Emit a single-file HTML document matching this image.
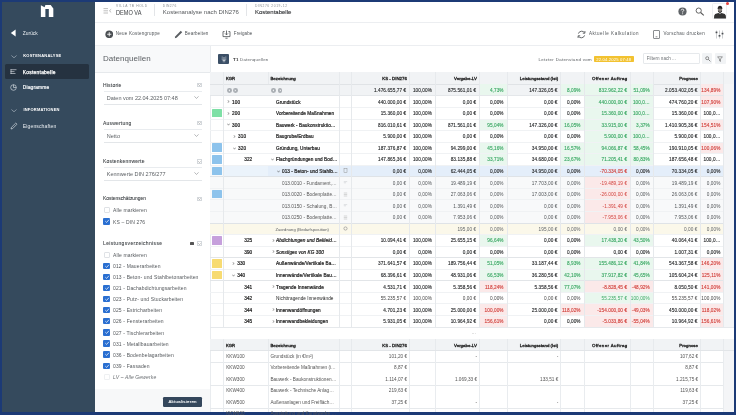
<!DOCTYPE html><html><head><meta charset="utf-8"><style>
html,body{margin:0;padding:0;width:736px;height:415px;overflow:hidden;background:#1c3a76;font-family:"Liberation Sans", sans-serif;}
div{box-sizing:border-box;}
</style></head><body><div id="root" style="position:absolute;left:0;top:0;width:736px;height:415px;will-change:transform;filter:blur(0.25px);">
<div style="position:absolute;left:2px;top:2px;width:732.00px;height:410.00px;background:#ffffff;"></div>
<div style="position:absolute;left:2px;top:2px;width:93.00px;height:410.00px;background:#354a5d;"></div>
<svg style="position:absolute;left:40px;top:4px" width="15" height="14" viewBox="0 0 15 14"><path d="M0.87 1.30 L4.58 3.16 L5.38 1.04 L10.68 1.04 L13.33 4.48 L13.33 12.97 L8.82 12.97 L8.82 5.12 L5.38 5.12 L5.38 12.97 L0.87 12.97 Z" fill="#fff"/></svg>
<svg style="position:absolute;left:10px;top:29px" width="7" height="8" viewBox="0 0 7 8"><path d="M0.8 4 L5.6 0.6 L5.6 7.4 Z" fill="#fff"/></svg>
<div style="position:absolute;left:22.8px;top:31.0px;font-size:4.9px;line-height:5.88px;color:#e8ecf0;font-weight:normal;white-space:nowrap;">Zurück</div>
<svg style="position:absolute;left:11px;top:54.6px" width="6" height="3.4" viewBox="0 0 6 3.4"><path d="M0.4 0.5 L3 2.8 L5.6 0.5" stroke="#b9c3cd" stroke-width="0.6" fill="none"/></svg>
<div style="position:absolute;left:23.2px;top:53.7px;font-size:4.0px;line-height:4.80px;color:#ffffff;font-weight:bold;white-space:nowrap;letter-spacing:0.22px;">KOSTENANALYSE</div>
<div style="position:absolute;left:5.2px;top:63.8px;width:84.00px;height:15.20px;background:#253240;border-radius:1.5px;"></div>
<svg style="position:absolute;left:9.5px;top:68.6px" width="7" height="6" viewBox="0 0 7 6"><path d="M0.5 0.7 H6.5 M0.5 2.6 H4.5 M0.5 4.5 H5.5" stroke="#e6ebf0" stroke-width="0.6"/><path d="M1 0.3 V5" stroke="#e6ebf0" stroke-width="0.6"/></svg>
<div style="position:absolute;left:22.8px;top:69.6px;font-size:4.9px;line-height:5.88px;color:#ffffff;font-weight:normal;white-space:nowrap;letter-spacing:0.25px;-webkit-text-stroke:0.25px #fff;">Kostentabelle</div>
<svg style="position:absolute;left:9.5px;top:83.5px" width="7" height="7" viewBox="0 0 7 7"><circle cx="3.5" cy="3.5" r="2.8" stroke="#e6ebf0" stroke-width="0.6" fill="none"/><path d="M3.5 0.7 V3.5 H6.3" stroke="#e6ebf0" stroke-width="0.6" fill="none"/></svg>
<div style="position:absolute;left:22.8px;top:84.6px;font-size:4.9px;line-height:5.88px;color:#f4f6f8;font-weight:normal;white-space:nowrap;letter-spacing:0.15px;-webkit-text-stroke:0.2px #f4f6f8;">Diagramme</div>
<svg style="position:absolute;left:11px;top:108.6px" width="6" height="3.4" viewBox="0 0 6 3.4"><path d="M0.4 0.5 L3 2.8 L5.6 0.5" stroke="#b9c3cd" stroke-width="0.6" fill="none"/></svg>
<div style="position:absolute;left:23.4px;top:108.0px;font-size:4.0px;line-height:4.80px;color:#ffffff;font-weight:bold;white-space:nowrap;letter-spacing:0.22px;">INFORMATIONEN</div>
<svg style="position:absolute;left:9.5px;top:121.5px" width="8" height="8" viewBox="0 0 8 8"><path d="M1 7 L1.4 5.4 L5.8 1 L7 2.2 L2.6 6.6 Z" stroke="#e6ebf0" stroke-width="0.6" fill="none"/></svg>
<div style="position:absolute;left:22.8px;top:122.6px;font-size:5.1px;line-height:6.12px;color:#e8ecf0;font-weight:normal;white-space:nowrap;letter-spacing:0.1px;">Eigenschaften</div>
<div style="position:absolute;left:95px;top:22px;width:639.00px;height:1.00px;background:#eceef1;"></div>
<svg style="position:absolute;left:102.5px;top:7.5px" width="9" height="6" viewBox="0 0 9 6"><path d="M0.5 0.6 H5 M0.5 2.8 H5 M0.5 5 H5 M8.2 1.2 L6.4 2.8 L8.2 4.4" stroke="#888" stroke-width="0.55" fill="none"/></svg>
<div style="position:absolute;left:116px;top:5.3px;font-size:3.3px;line-height:3.96px;color:#8a8f94;font-weight:normal;white-space:nowrap;letter-spacing:0.6px;">VILLA TB HOLD</div>
<div style="position:absolute;left:116px;top:9.4px;font-size:6.5px;line-height:7.80px;color:#4a4d50;font-weight:normal;white-space:nowrap;transform:scaleX(0.86);transform-origin:0 0;-webkit-text-stroke:0.05px #4a4d50;">DEMO VA</div>
<div style="position:absolute;left:154.3px;top:4.4px;width:0.70px;height:11.60px;background:#e3e5e8;"></div>
<div style="position:absolute;left:162.8px;top:5.3px;font-size:3.3px;line-height:3.96px;color:#8a8f94;font-weight:normal;white-space:nowrap;letter-spacing:0.45px;">DIN276</div>
<div style="position:absolute;left:162.8px;top:9.0px;font-size:6.0px;line-height:7.20px;color:#55585b;font-weight:normal;white-space:nowrap;">Kostenanalyse nach DIN276</div>
<div style="position:absolute;left:246.3px;top:4.4px;width:0.70px;height:11.60px;background:#e3e5e8;"></div>
<div style="position:absolute;left:255px;top:5.3px;font-size:3.3px;line-height:3.96px;color:#8a8f94;font-weight:normal;white-space:nowrap;letter-spacing:0.6px;">DIN276 2019-12</div>
<div style="position:absolute;left:255px;top:9.0px;font-size:6.0px;line-height:7.20px;color:#2a2c2f;font-weight:normal;white-space:nowrap;-webkit-text-stroke:0.1px #2a2c2f;">Kostentabelle</div>
<svg style="position:absolute;left:677.5px;top:6.8px" width="9" height="9" viewBox="0 0 9 9"><circle cx="4.5" cy="4.5" r="4.1" fill="#5f6367"/><path d="M3.2 3.4 Q3.2 2.2 4.5 2.2 Q5.8 2.2 5.8 3.3 Q5.8 4.1 4.6 4.6 L4.6 5.5" stroke="#fff" stroke-width="0.8" fill="none"/><circle cx="4.6" cy="6.7" r="0.5" fill="#fff"/></svg>
<svg style="position:absolute;left:695px;top:6.5px" width="10" height="9" viewBox="0 0 10 9"><circle cx="3.7" cy="3.6" r="2.6" stroke="#555" stroke-width="0.9" fill="none"/><path d="M5.6 5.5 L8.8 8.4" stroke="#555" stroke-width="1.1"/></svg>
<div style="position:absolute;left:712.4px;top:3.4px;width:14.80px;height:15.40px;background:#fff;border:0.5px solid #eef0f2;border-radius:1.5px;"></div>
<svg style="position:absolute;left:713.0px;top:4px" width="14" height="15" viewBox="0 0 14 15"><path d="M1 14.6 L1.2 11.6 Q1.6 9.6 4.5 9.2 L6 8.9 L7 10 L8 8.9 L9.5 9.2 Q12.4 9.6 12.8 11.6 L13 14.6 Z" fill="#333"/><ellipse cx="7" cy="5.6" rx="2.1" ry="2.7" fill="#8c8580"/><path d="M4.6 4.2 Q4.8 1.6 7 1.7 Q9.4 1.6 9.4 4.2 L9.2 5 Q7 3.8 4.8 5 Z" fill="#222"/><path d="M4.9 6 Q7 10.2 9.1 6 L9 7.6 Q7 10.4 5 7.6 Z" fill="#262626"/></svg>
<div style="position:absolute;left:725.6px;top:2.2px;width:3.2px;height:3.2px;border-radius:50%;background:#e8413c;"></div>
<div style="position:absolute;left:95px;top:44.6px;width:639.00px;height:1.00px;background:#eceef1;"></div>
<svg style="position:absolute;left:104.6px;top:29.8px" width="8.5" height="8.5" viewBox="0 0 9 9"><circle cx="4.5" cy="4.5" r="4.1" fill="#4b4f53"/><path d="M4.5 2.3 V6.7 M2.3 4.5 H6.7" stroke="#fff" stroke-width="0.9"/></svg>
<div style="position:absolute;left:115.8px;top:31.2px;font-size:4.5px;line-height:5.40px;color:#505458;font-weight:normal;white-space:nowrap;letter-spacing:0.25px;">Neue Kostengruppe</div>
<svg style="position:absolute;left:173.5px;top:29.8px" width="9" height="9" viewBox="0 0 9 9"><path d="M0.8 8.2 L1.2 6.4 L6.8 0.8 L8.2 2.2 L2.6 7.8 Z" fill="#5a5e62"/></svg>
<div style="position:absolute;left:184.8px;top:31.2px;font-size:4.5px;line-height:5.40px;color:#505458;font-weight:normal;white-space:nowrap;letter-spacing:0.2px;">Bearbeiten</div>
<svg style="position:absolute;left:221.5px;top:29.6px" width="9" height="9" viewBox="0 0 9 9"><path d="M2.6 1.6 H1 V6.6 H8 V1.6 H6.4" stroke="#4b4f53" stroke-width="0.8" fill="none"/><path d="M4.5 0.5 V4.8 M3 3.4 L4.5 4.9 L6 3.4 M3.4 8.2 H5.6" stroke="#4b4f53" stroke-width="0.8" fill="none"/></svg>
<div style="position:absolute;left:233.8px;top:31.2px;font-size:4.5px;line-height:5.40px;color:#505458;font-weight:normal;white-space:nowrap;letter-spacing:0.1px;">Freigabe</div>
<svg style="position:absolute;left:577.3px;top:29.6px" width="9" height="9" viewBox="0 0 9 9"><path d="M1.4 3.6 Q2.2 1.2 4.6 1.2 Q6.4 1.2 7.4 2.6 M7.6 5.4 Q6.8 7.8 4.4 7.8 Q2.6 7.8 1.6 6.4" stroke="#4b4f53" stroke-width="0.85" fill="none"/><path d="M7.9 1 V3.2 H5.8 M1.1 8 V5.8 H3.2" stroke="#4b4f53" stroke-width="0.85" fill="none"/></svg>
<div style="position:absolute;left:588.9px;top:31.2px;font-size:4.5px;line-height:5.40px;color:#505458;font-weight:normal;white-space:nowrap;letter-spacing:0.55px;">Aktuelle Kalkulation</div>
<svg style="position:absolute;left:652.5px;top:29.5px" width="7" height="9" viewBox="0 0 7 9"><rect x="0.5" y="0.5" width="6" height="8" rx="0.5" stroke="#5a5e62" stroke-width="0.7" fill="none"/><path d="M2.6 6.8 H4.4" stroke="#5a5e62" stroke-width="0.7"/></svg>
<div style="position:absolute;left:663.4px;top:31.2px;font-size:4.5px;line-height:5.40px;color:#505458;font-weight:normal;white-space:nowrap;letter-spacing:0.35px;">Vorschau drucken</div>
<svg style="position:absolute;left:715px;top:29.6px" width="9" height="9" viewBox="0 0 9 9"><path d="M1.5 0.5 V8.5 M4.5 0.5 V8.5 M7.5 0.5 V8.5" stroke="#9a9ea2" stroke-width="0.5"/><rect x="0.6" y="1.6" width="1.8" height="1.6" fill="#4b4f53"/><rect x="3.6" y="5" width="1.8" height="1.6" fill="#4b4f53"/><rect x="6.6" y="2.8" width="1.8" height="1.6" fill="#4b4f53"/></svg>
<div style="position:absolute;left:95px;top:45.6px;width:115.00px;height:26.80px;background:#f8f9fa;"></div>
<div style="position:absolute;left:95px;top:72.2px;width:115.00px;height:0.80px;background:#e6e9ec;"></div>
<div style="position:absolute;left:209.6px;top:45.6px;width:0.80px;height:366.40px;background:#e9ecef;"></div>
<div style="position:absolute;left:103px;top:54.0px;font-size:8.0px;line-height:9.60px;color:#5a5e62;font-weight:normal;white-space:nowrap;letter-spacing:0.05px;">Datenquellen</div>
<div style="position:absolute;left:103px;top:82.0px;font-size:5.0px;line-height:6.00px;color:#3a3e42;font-weight:normal;white-space:nowrap;-webkit-text-stroke:0.08px #3a3e42;letter-spacing:0.2px;">Historie</div>
<div style="position:absolute;left:197.4px;top:83.0px;width:4.4px;height:4.4px;border:0.5px solid #d5d9dd;background:#fff;"></div>
<svg style="position:absolute;left:198.20000000000002px;top:84.3px" width="3" height="2" viewBox="0 0 3 2"><path d="M0.2 0.3 L1.5 1.6 L2.8 0.3" stroke="#777" stroke-width="0.5" fill="none"/></svg>
<div style="position:absolute;left:103.5px;top:91.0px;width:98.50px;height:0.60px;background:#e9ecef;"></div>
<div style="position:absolute;left:103.5px;top:103.8px;width:98.50px;height:0.60px;background:#e3e6e9;"></div>
<div style="position:absolute;left:106.8px;top:95.0px;font-size:5.5px;line-height:6.60px;color:#5a5e62;font-weight:normal;white-space:nowrap;">Daten vom 22.04.2025 07:48</div>
<svg style="position:absolute;left:194px;top:96.2px" width="5" height="3" viewBox="0 0 5 3"><path d="M0.4 0.4 L2.5 2.4 L4.6 0.4" stroke="#6c7075" stroke-width="0.5" fill="none"/></svg>
<div style="position:absolute;left:103px;top:120.0px;font-size:5.0px;line-height:6.00px;color:#3a3e42;font-weight:normal;white-space:nowrap;-webkit-text-stroke:0.08px #3a3e42;letter-spacing:0.2px;">Auswertung</div>
<div style="position:absolute;left:197.4px;top:121.0px;width:4.4px;height:4.4px;border:0.5px solid #d5d9dd;background:#fff;"></div>
<svg style="position:absolute;left:198.20000000000002px;top:122.3px" width="3" height="2" viewBox="0 0 3 2"><path d="M0.2 0.3 L1.5 1.6 L2.8 0.3" stroke="#777" stroke-width="0.5" fill="none"/></svg>
<div style="position:absolute;left:103.5px;top:129.0px;width:98.50px;height:0.60px;background:#e9ecef;"></div>
<div style="position:absolute;left:103.5px;top:141.8px;width:98.50px;height:0.60px;background:#e3e6e9;"></div>
<div style="position:absolute;left:106.8px;top:133.0px;font-size:5.5px;line-height:6.60px;color:#5a5e62;font-weight:normal;white-space:nowrap;">Netto</div>
<svg style="position:absolute;left:194px;top:134.2px" width="5" height="3" viewBox="0 0 5 3"><path d="M0.4 0.4 L2.5 2.4 L4.6 0.4" stroke="#6c7075" stroke-width="0.5" fill="none"/></svg>
<div style="position:absolute;left:103px;top:158.2px;font-size:5.0px;line-height:6.00px;color:#3a3e42;font-weight:normal;white-space:nowrap;-webkit-text-stroke:0.08px #3a3e42;letter-spacing:0.2px;">Kostenkennwerte</div>
<div style="position:absolute;left:197.4px;top:159.2px;width:4.4px;height:4.4px;border:0.5px solid #d5d9dd;background:#fff;"></div>
<svg style="position:absolute;left:198.20000000000002px;top:160.5px" width="3" height="2" viewBox="0 0 3 2"><path d="M0.2 0.3 L1.5 1.6 L2.8 0.3" stroke="#777" stroke-width="0.5" fill="none"/></svg>
<div style="position:absolute;left:103.5px;top:167.2px;width:98.50px;height:0.60px;background:#e9ecef;"></div>
<div style="position:absolute;left:103.5px;top:180.0px;width:98.50px;height:0.60px;background:#e3e6e9;"></div>
<div style="position:absolute;left:106.8px;top:171.2px;font-size:5.5px;line-height:6.60px;color:#5a5e62;font-weight:normal;white-space:nowrap;">Kennwerte DIN 276/277</div>
<svg style="position:absolute;left:194px;top:172.39999999999998px" width="5" height="3" viewBox="0 0 5 3"><path d="M0.4 0.4 L2.5 2.4 L4.6 0.4" stroke="#6c7075" stroke-width="0.5" fill="none"/></svg>
<div style="position:absolute;left:103px;top:196.0px;font-size:4.9px;line-height:5.88px;color:#3a3e42;font-weight:normal;white-space:nowrap;-webkit-text-stroke:0.08px #3a3e42;">Kostenschätzungen</div>
<div style="position:absolute;left:197.4px;top:197px;width:4.4px;height:4.4px;border:0.5px solid #d5d9dd;background:#fff;"></div>
<svg style="position:absolute;left:198.20000000000002px;top:198.3px" width="3" height="2" viewBox="0 0 3 2"><path d="M0.2 0.3 L1.5 1.6 L2.8 0.3" stroke="#777" stroke-width="0.5" fill="none"/></svg>
<div style="position:absolute;left:103.5px;top:207.0px;width:6.2px;height:6.2px;border-radius:1px;border:0.5px solid #dfe2e6;background:#fff;"></div>
<div style="position:absolute;left:113px;top:207.3px;font-size:5.0px;line-height:6.00px;color:#54585c;font-weight:normal;white-space:nowrap;letter-spacing:0.14px;">Alle markieren</div>
<div style="position:absolute;left:103.4px;top:218.3px;width:6.4px;height:6.4px;border-radius:1px;background:#2a6fd1;"></div>
<svg style="position:absolute;left:103.5px;top:218.3px" width="6.2" height="6.2" viewBox="0 0 6 6"><path d="M1.3 3.1 L2.5 4.3 L4.8 1.7" stroke="#fff" stroke-width="0.7" fill="none"/></svg>
<div style="position:absolute;left:113px;top:218.60000000000002px;font-size:5.0px;line-height:6.00px;color:#54585c;font-weight:normal;white-space:nowrap;letter-spacing:0.14px;">KS – DIN 276</div>
<div style="position:absolute;left:103px;top:240.3px;font-size:5.0px;line-height:6.00px;color:#3a3e42;font-weight:normal;white-space:nowrap;-webkit-text-stroke:0.08px #3a3e42;letter-spacing:0.35px;">Leistungsverzeichnisse</div>
<div style="position:absolute;left:189.8px;top:242.2px;width:4px;height:3.2px;border-radius:0.6px;background:#555;"></div>
<div style="position:absolute;left:197.4px;top:241.2px;width:4.4px;height:4.4px;border:0.5px solid #d5d9dd;background:#fff;"></div>
<svg style="position:absolute;left:198.20000000000002px;top:242.5px" width="3" height="2" viewBox="0 0 3 2"><path d="M0.2 0.3 L1.5 1.6 L2.8 0.3" stroke="#777" stroke-width="0.5" fill="none"/></svg>
<div style="position:absolute;left:103.5px;top:251.7px;width:6.2px;height:6.2px;border-radius:1px;border:0.5px solid #dfe2e6;background:#fff;"></div>
<div style="position:absolute;left:113px;top:252.0px;font-size:5.0px;line-height:6.00px;color:#54585c;font-weight:normal;white-space:nowrap;letter-spacing:0.14px;">Alle markieren</div>
<div style="position:absolute;left:103.4px;top:262.6px;width:6.4px;height:6.4px;border-radius:1px;background:#2a6fd1;"></div>
<svg style="position:absolute;left:103.5px;top:262.6px" width="6.2" height="6.2" viewBox="0 0 6 6"><path d="M1.3 3.1 L2.5 4.3 L4.8 1.7" stroke="#fff" stroke-width="0.7" fill="none"/></svg>
<div style="position:absolute;left:113px;top:262.90000000000003px;font-size:5.0px;line-height:6.00px;color:#54585c;font-weight:normal;white-space:nowrap;letter-spacing:0.14px;">012 - Mauerarbeiten</div>
<div style="position:absolute;left:103.4px;top:273.70000000000005px;width:6.4px;height:6.4px;border-radius:1px;background:#2a6fd1;"></div>
<svg style="position:absolute;left:103.5px;top:273.70000000000005px" width="6.2" height="6.2" viewBox="0 0 6 6"><path d="M1.3 3.1 L2.5 4.3 L4.8 1.7" stroke="#fff" stroke-width="0.7" fill="none"/></svg>
<div style="position:absolute;left:113px;top:274.00000000000006px;font-size:5.0px;line-height:6.00px;color:#54585c;font-weight:normal;white-space:nowrap;letter-spacing:0.14px;">013 - Beton- und Stahlbetonarbeiten</div>
<div style="position:absolute;left:103.4px;top:284.8px;width:6.4px;height:6.4px;border-radius:1px;background:#2a6fd1;"></div>
<svg style="position:absolute;left:103.5px;top:284.8px" width="6.2" height="6.2" viewBox="0 0 6 6"><path d="M1.3 3.1 L2.5 4.3 L4.8 1.7" stroke="#fff" stroke-width="0.7" fill="none"/></svg>
<div style="position:absolute;left:113px;top:285.1px;font-size:5.0px;line-height:6.00px;color:#54585c;font-weight:normal;white-space:nowrap;letter-spacing:0.14px;">021 - Dachabdichtungsarbeiten</div>
<div style="position:absolute;left:103.4px;top:295.90000000000003px;width:6.4px;height:6.4px;border-radius:1px;background:#2a6fd1;"></div>
<svg style="position:absolute;left:103.5px;top:295.90000000000003px" width="6.2" height="6.2" viewBox="0 0 6 6"><path d="M1.3 3.1 L2.5 4.3 L4.8 1.7" stroke="#fff" stroke-width="0.7" fill="none"/></svg>
<div style="position:absolute;left:113px;top:296.20000000000005px;font-size:5.0px;line-height:6.00px;color:#54585c;font-weight:normal;white-space:nowrap;letter-spacing:0.14px;">023 - Putz- und Stuckarbeiten</div>
<div style="position:absolute;left:103.4px;top:307.0px;width:6.4px;height:6.4px;border-radius:1px;background:#2a6fd1;"></div>
<svg style="position:absolute;left:103.5px;top:307.0px" width="6.2" height="6.2" viewBox="0 0 6 6"><path d="M1.3 3.1 L2.5 4.3 L4.8 1.7" stroke="#fff" stroke-width="0.7" fill="none"/></svg>
<div style="position:absolute;left:113px;top:307.3px;font-size:5.0px;line-height:6.00px;color:#54585c;font-weight:normal;white-space:nowrap;letter-spacing:0.14px;">025 - Estricharbeiten</div>
<div style="position:absolute;left:103.4px;top:318.1px;width:6.4px;height:6.4px;border-radius:1px;background:#2a6fd1;"></div>
<svg style="position:absolute;left:103.5px;top:318.1px" width="6.2" height="6.2" viewBox="0 0 6 6"><path d="M1.3 3.1 L2.5 4.3 L4.8 1.7" stroke="#fff" stroke-width="0.7" fill="none"/></svg>
<div style="position:absolute;left:113px;top:318.40000000000003px;font-size:5.0px;line-height:6.00px;color:#54585c;font-weight:normal;white-space:nowrap;letter-spacing:0.14px;">026 - Fensterarbeiten</div>
<div style="position:absolute;left:103.4px;top:329.20000000000005px;width:6.4px;height:6.4px;border-radius:1px;background:#2a6fd1;"></div>
<svg style="position:absolute;left:103.5px;top:329.20000000000005px" width="6.2" height="6.2" viewBox="0 0 6 6"><path d="M1.3 3.1 L2.5 4.3 L4.8 1.7" stroke="#fff" stroke-width="0.7" fill="none"/></svg>
<div style="position:absolute;left:113px;top:329.50000000000006px;font-size:5.0px;line-height:6.00px;color:#54585c;font-weight:normal;white-space:nowrap;letter-spacing:0.14px;">027 - Tischlerarbeiten</div>
<div style="position:absolute;left:103.4px;top:340.3px;width:6.4px;height:6.4px;border-radius:1px;background:#2a6fd1;"></div>
<svg style="position:absolute;left:103.5px;top:340.3px" width="6.2" height="6.2" viewBox="0 0 6 6"><path d="M1.3 3.1 L2.5 4.3 L4.8 1.7" stroke="#fff" stroke-width="0.7" fill="none"/></svg>
<div style="position:absolute;left:113px;top:340.6px;font-size:5.0px;line-height:6.00px;color:#54585c;font-weight:normal;white-space:nowrap;letter-spacing:0.14px;">031 - Metallbauarbeiten</div>
<div style="position:absolute;left:103.4px;top:351.40000000000003px;width:6.4px;height:6.4px;border-radius:1px;background:#2a6fd1;"></div>
<svg style="position:absolute;left:103.5px;top:351.40000000000003px" width="6.2" height="6.2" viewBox="0 0 6 6"><path d="M1.3 3.1 L2.5 4.3 L4.8 1.7" stroke="#fff" stroke-width="0.7" fill="none"/></svg>
<div style="position:absolute;left:113px;top:351.70000000000005px;font-size:5.0px;line-height:6.00px;color:#54585c;font-weight:normal;white-space:nowrap;letter-spacing:0.14px;">036 - Bodenbelagarbeiten</div>
<div style="position:absolute;left:103.4px;top:362.5px;width:6.4px;height:6.4px;border-radius:1px;background:#2a6fd1;"></div>
<svg style="position:absolute;left:103.5px;top:362.5px" width="6.2" height="6.2" viewBox="0 0 6 6"><path d="M1.3 3.1 L2.5 4.3 L4.8 1.7" stroke="#fff" stroke-width="0.7" fill="none"/></svg>
<div style="position:absolute;left:113px;top:362.8px;font-size:5.0px;line-height:6.00px;color:#54585c;font-weight:normal;white-space:nowrap;letter-spacing:0.14px;">039 - Fassaden</div>
<div style="position:absolute;left:103.5px;top:373.6px;width:6.2px;height:6.2px;border-radius:1px;border:0.5px solid #eef0f2;background:#fff;"></div>
<div style="position:absolute;left:113px;top:373.90000000000003px;font-size:5.0px;line-height:6.00px;color:#54585c;font-weight:normal;white-space:nowrap;letter-spacing:0.14px;"><i style="color:#6a6e72">LV – Alle Gewerke</i></div>
<div style="position:absolute;left:95px;top:388.6px;width:114.60px;height:23.40px;background:#f7f8f9;"></div>
<div style="position:absolute;left:163.2px;top:396.8px;width:38.80px;height:9.80px;background:#34475c;border-radius:1.2px;"></div>
<div style="position:absolute;left:163.2px;top:399.0px;font-size:4.4px;line-height:5.28px;color:#f4f6f8;font-weight:normal;white-space:nowrap;letter-spacing:0.25px;-webkit-text-stroke:0.1px #fff;"><span style="display:block;width:38.8px;text-align:center">Aktualisieren</span></div>
<div style="position:absolute;left:218px;top:53.8px;width:11.00px;height:10.00px;background:#3b4f66;border-radius:1px;"></div>
<svg style="position:absolute;left:219.5px;top:55.2px" width="8" height="8" viewBox="0 0 8 8"><path d="M2.2 1.4 V5 H5.8 V1.4" stroke="#c8d2dc" stroke-width="0.5" fill="none"/><path d="M4 2 V6.2 M2.9 5.1 L4 6.3 L5.1 5.1" stroke="#fff" stroke-width="0.6" fill="none"/><path d="M2.6 6.9 H5.4" stroke="#c8d2dc" stroke-width="0.4"/></svg>
<div style="position:absolute;left:233px;top:56.6px;font-size:4.4px;line-height:5.28px;color:#606468;font-weight:normal;white-space:nowrap;letter-spacing:0.22px;"><b style="color:#333">T1</b> Datenquellen</div>
<div style="position:absolute;left:538.5px;top:56.6px;font-size:4.3px;line-height:5.16px;color:#55595d;font-weight:normal;white-space:nowrap;letter-spacing:0.36px;">Letzter Datenstand vom</div>
<div style="position:absolute;left:594px;top:55.9px;width:40.10px;height:6.40px;background:#f2c230;border-radius:0.8px;"></div>
<div style="position:absolute;left:596.2px;top:56.9px;font-size:4.2px;line-height:5.04px;color:#ffffff;font-weight:normal;white-space:nowrap;letter-spacing:0.15px;">22.04.2025 07:48</div>
<div style="position:absolute;left:642.5px;top:53.4px;width:57.50px;height:10.60px;background:#fff;border:0.6px solid #e6e9ec;border-radius:1px;"></div>
<div style="position:absolute;left:646.8px;top:56.3px;font-size:4.6px;line-height:5.52px;color:#6e7276;font-weight:normal;white-space:nowrap;">Filtern nach ...</div>
<div style="position:absolute;left:702.3px;top:53.4px;width:10.00px;height:10.60px;background:#f1f3f5;border-radius:1px;"></div>
<svg style="position:absolute;left:704.5px;top:55.6px" width="6" height="6" viewBox="0 0 6 6"><circle cx="2.2" cy="2.2" r="1.5" stroke="#555" stroke-width="0.6" fill="none"/><path d="M3.3 3.3 L5.4 5.4" stroke="#555" stroke-width="0.7"/></svg>
<div style="position:absolute;left:715px;top:53.4px;width:10.50px;height:10.60px;background:#f1f3f5;border-radius:1px;"></div>
<svg style="position:absolute;left:717.3px;top:55.6px" width="6" height="6" viewBox="0 0 6 6"><path d="M0.6 0.8 H5.4 L3.5 3 V5.4 L2.5 4.8 V3 Z" stroke="#555" stroke-width="0.55" fill="none"/></svg>
<div style="position:absolute;left:210px;top:72.2px;width:524.00px;height:12.00px;background:#f1f3f5;"></div>
<div style="position:absolute;left:223.29999999999998px;top:72.2px;width:0.70px;height:12.00px;background:#e7eaed;"></div>
<div style="position:absolute;left:267.5px;top:72.2px;width:0.70px;height:12.00px;background:#e7eaed;"></div>
<div style="position:absolute;left:339.09999999999997px;top:72.2px;width:0.70px;height:12.00px;background:#e7eaed;"></div>
<div style="position:absolute;left:351.2px;top:72.2px;width:0.70px;height:12.00px;background:#e7eaed;"></div>
<div style="position:absolute;left:409.2px;top:72.2px;width:0.70px;height:12.00px;background:#e7eaed;"></div>
<div style="position:absolute;left:434.9px;top:72.2px;width:0.70px;height:12.00px;background:#e7eaed;"></div>
<div style="position:absolute;left:479.2px;top:72.2px;width:0.70px;height:12.00px;background:#e7eaed;"></div>
<div style="position:absolute;left:506.5px;top:72.2px;width:0.70px;height:12.00px;background:#e7eaed;"></div>
<div style="position:absolute;left:560.4000000000001px;top:72.2px;width:0.70px;height:12.00px;background:#e7eaed;"></div>
<div style="position:absolute;left:583.5px;top:72.2px;width:0.70px;height:12.00px;background:#e7eaed;"></div>
<div style="position:absolute;left:630.0px;top:72.2px;width:0.70px;height:12.00px;background:#e7eaed;"></div>
<div style="position:absolute;left:652.7px;top:72.2px;width:0.70px;height:12.00px;background:#e7eaed;"></div>
<div style="position:absolute;left:700.3000000000001px;top:72.2px;width:0.70px;height:12.00px;background:#e7eaed;"></div>
<div style="position:absolute;left:723.3000000000001px;top:72.2px;width:0.70px;height:12.00px;background:#e7eaed;"></div>
<div style="position:absolute;left:210px;top:83.7px;width:524.00px;height:0.80px;background:#e2e5e8;"></div>
<div style="position:absolute;left:226.0px;top:75.96000000000001px;font-size:4.2px;line-height:5.04px;color:#1e1e1e;font-weight:normal;white-space:nowrap;-webkit-text-stroke:0.3px #1e1e1e;">KGR</div>
<div style="position:absolute;left:270.4px;top:75.96000000000001px;font-size:4.4px;line-height:5.28px;color:#1e1e1e;font-weight:normal;white-space:nowrap;-webkit-text-stroke:0.3px #1e1e1e;">Bezeichnung</div>
<div style="position:absolute;right:329.10px;top:75.96000000000001px;font-size:4.4px;line-height:5.28px;color:#1e1e1e;font-weight:normal;white-space:nowrap;text-align:right;-webkit-text-stroke:0.3px #1e1e1e;">KS - DIN276</div>
<div style="position:absolute;right:259.10px;top:75.96000000000001px;font-size:4.4px;line-height:5.28px;color:#1e1e1e;font-weight:normal;white-space:nowrap;text-align:right;-webkit-text-stroke:0.3px #1e1e1e;">Vergabe-LV</div>
<div style="position:absolute;right:177.90px;top:75.96000000000001px;font-size:4.4px;line-height:5.28px;color:#1e1e1e;font-weight:normal;white-space:nowrap;text-align:right;-webkit-text-stroke:0.3px #1e1e1e;">Leistungsstand (Ist)</div>
<div style="position:absolute;right:108.30px;top:75.96000000000001px;font-size:4.4px;line-height:5.28px;color:#1e1e1e;font-weight:normal;white-space:nowrap;text-align:right;-webkit-text-stroke:0.3px #1e1e1e;"><span style="letter-spacing:0.4px">Offener Auftrag</span></div>
<div style="position:absolute;right:38.00px;top:75.96000000000001px;font-size:4.4px;line-height:5.28px;color:#1e1e1e;font-weight:normal;white-space:nowrap;text-align:right;-webkit-text-stroke:0.3px #1e1e1e;">Prognose</div>
<div style="position:absolute;left:210px;top:84.2px;width:513.60px;height:11.56px;background:#f1f3f5;"></div>
<div style="position:absolute;left:210px;top:83.8px;width:524.00px;height:0.80px;background:#e0e3e6;"></div>
<div style="position:absolute;left:226.8px;top:87.8px;width:4.8px;height:4.8px;border-radius:50%;background:#a9aeb3;"></div>
<div style="position:absolute;left:233.2px;top:87.8px;width:4.8px;height:4.8px;border-radius:50%;background:#a9aeb3;"></div>
<div style="position:absolute;left:271.2px;top:87.8px;width:4.8px;height:4.8px;border-radius:50%;background:#a9aeb3;"></div>
<div style="position:absolute;left:277.6px;top:87.8px;width:4.8px;height:4.8px;border-radius:50%;background:#a9aeb3;"></div>
<svg style="position:absolute;left:226.8px;top:87.8px" width="4.8" height="4.8" viewBox="0 0 4.8 4.8"><path d="M3 1.2 L1.6 2.4 L3 3.6" fill="#f1f3f5"/></svg>
<svg style="position:absolute;left:233.2px;top:87.8px" width="4.8" height="4.8" viewBox="0 0 4.8 4.8"><path d="M1.8 1.2 L3.2 2.4 L1.8 3.6" fill="#f1f3f5"/></svg>
<svg style="position:absolute;left:271.2px;top:87.8px" width="4.8" height="4.8" viewBox="0 0 4.8 4.8"><path d="M3 1.2 L1.6 2.4 L3 3.6" fill="#f1f3f5"/></svg>
<svg style="position:absolute;left:277.6px;top:87.8px" width="4.8" height="4.8" viewBox="0 0 4.8 4.8"><path d="M1.8 1.2 L3.2 2.4 L1.8 3.6" fill="#f1f3f5"/></svg>
<div style="position:absolute;left:479.5px;top:84.2px;width:27.30px;height:11.56px;background:#e9f7ee;"></div>
<div style="position:absolute;left:560.7px;top:84.2px;width:23.10px;height:11.56px;background:#e9f7ee;"></div>
<div style="position:absolute;left:583.8px;top:84.2px;width:46.50px;height:11.56px;background:#e9f7ee;"></div>
<div style="position:absolute;left:630.3px;top:84.2px;width:22.70px;height:11.56px;background:#e9f7ee;"></div>
<div style="position:absolute;left:700.6px;top:84.2px;width:23.00px;height:11.56px;background:#fbe9e9;"></div>
<div style="position:absolute;right:329.70px;top:88.06px;font-size:4.7px;line-height:5.64px;color:#2a2c2e;font-weight:normal;white-space:nowrap;text-align:right;-webkit-text-stroke:0.12px #2a2c2e;letter-spacing:0.08px;">1.476.655,77 €</div>
<div style="position:absolute;right:304.00px;top:88.06px;font-size:4.7px;line-height:5.64px;color:#2a2c2e;font-weight:normal;white-space:nowrap;text-align:right;-webkit-text-stroke:0.12px #2a2c2e;letter-spacing:0.08px;">100,00%</div>
<div style="position:absolute;right:259.70px;top:88.06px;font-size:4.7px;line-height:5.64px;color:#2a2c2e;font-weight:normal;white-space:nowrap;text-align:right;-webkit-text-stroke:0.12px #2a2c2e;letter-spacing:0.08px;">875.561,01 €</div>
<div style="position:absolute;right:232.40px;top:88.06px;font-size:4.7px;line-height:5.64px;color:#3aa864;font-weight:normal;white-space:nowrap;text-align:right;-webkit-text-stroke:0.12px #3aa864;letter-spacing:0.08px;">4,73%</div>
<div style="position:absolute;right:178.50px;top:88.06px;font-size:4.7px;line-height:5.64px;color:#2a2c2e;font-weight:normal;white-space:nowrap;text-align:right;-webkit-text-stroke:0.12px #2a2c2e;letter-spacing:0.08px;">147.326,05 €</div>
<div style="position:absolute;right:155.40px;top:88.06px;font-size:4.7px;line-height:5.64px;color:#3aa864;font-weight:normal;white-space:nowrap;text-align:right;-webkit-text-stroke:0.12px #3aa864;letter-spacing:0.08px;">8,09%</div>
<div style="position:absolute;right:108.90px;top:88.06px;font-size:4.7px;line-height:5.64px;color:#3aa864;font-weight:normal;white-space:nowrap;text-align:right;-webkit-text-stroke:0.12px #3aa864;letter-spacing:0.08px;">832.962,22 €</div>
<div style="position:absolute;right:86.20px;top:88.06px;font-size:4.7px;line-height:5.64px;color:#3aa864;font-weight:normal;white-space:nowrap;text-align:right;-webkit-text-stroke:0.12px #3aa864;letter-spacing:0.08px;">51,09%</div>
<div style="position:absolute;right:38.60px;top:88.06px;font-size:4.7px;line-height:5.64px;color:#2a2c2e;font-weight:normal;white-space:nowrap;text-align:right;-webkit-text-stroke:0.12px #2a2c2e;letter-spacing:0.08px;">2.053.402,05 €</div>
<div style="position:absolute;right:15.60px;top:88.06px;font-size:4.7px;line-height:5.64px;color:#d2413c;font-weight:normal;white-space:nowrap;text-align:right;-webkit-text-stroke:0.12px #d2413c;letter-spacing:0.08px;">134,89%</div>
<div style="position:absolute;left:583.8px;top:95.76px;width:46.50px;height:11.56px;background:#e9f7ee;"></div>
<div style="position:absolute;left:630.3px;top:95.76px;width:22.70px;height:11.56px;background:#e9f7ee;"></div>
<div style="position:absolute;left:700.6px;top:95.76px;width:23.00px;height:11.56px;background:#fbe9e9;"></div>
<svg style="position:absolute;left:227px;top:100.06px" width="3" height="3" viewBox="0 0 3 3"><path d="M0.6 0.3 L2.2 1.5 L0.6 2.7" stroke="#444" stroke-width="0.5" fill="none"/></svg>
<div style="position:absolute;left:232px;top:99.62px;font-size:4.7px;line-height:5.64px;color:#1a1a1a;font-weight:normal;white-space:nowrap;-webkit-text-stroke:0.2px #1a1a1a;letter-spacing:0.1px;">100</div>
<div style="position:absolute;left:276px;top:99.62px;width:62px;overflow:hidden;text-overflow:ellipsis;font-size:4.7px;line-height:5.64px;color:#222;font-weight:normal;white-space:nowrap;letter-spacing:0.06px;-webkit-text-stroke:0.2px #222;">Grundstück</div>
<div style="position:absolute;right:329.70px;top:99.62px;font-size:4.7px;line-height:5.64px;color:#2a2c2e;font-weight:normal;white-space:nowrap;text-align:right;-webkit-text-stroke:0.12px #2a2c2e;letter-spacing:0.08px;">440.000,00 €</div>
<div style="position:absolute;right:304.00px;top:99.62px;font-size:4.7px;line-height:5.64px;color:#2a2c2e;font-weight:normal;white-space:nowrap;text-align:right;-webkit-text-stroke:0.12px #2a2c2e;letter-spacing:0.08px;">100,00%</div>
<div style="position:absolute;right:259.70px;top:99.62px;font-size:4.7px;line-height:5.64px;color:#2a2c2e;font-weight:normal;white-space:nowrap;text-align:right;-webkit-text-stroke:0.12px #2a2c2e;letter-spacing:0.08px;">0,00 €</div>
<div style="position:absolute;right:232.40px;top:99.62px;font-size:4.7px;line-height:5.64px;color:#2a2c2e;font-weight:normal;white-space:nowrap;text-align:right;-webkit-text-stroke:0.12px #2a2c2e;letter-spacing:0.08px;">0,00%</div>
<div style="position:absolute;right:178.50px;top:99.62px;font-size:4.7px;line-height:5.64px;color:#2a2c2e;font-weight:normal;white-space:nowrap;text-align:right;-webkit-text-stroke:0.12px #2a2c2e;letter-spacing:0.08px;">0,00 €</div>
<div style="position:absolute;right:155.40px;top:99.62px;font-size:4.7px;line-height:5.64px;color:#2a2c2e;font-weight:normal;white-space:nowrap;text-align:right;-webkit-text-stroke:0.12px #2a2c2e;letter-spacing:0.08px;">0,00%</div>
<div style="position:absolute;right:108.90px;top:99.62px;font-size:4.7px;line-height:5.64px;color:#3aa864;font-weight:normal;white-space:nowrap;text-align:right;-webkit-text-stroke:0.12px #3aa864;letter-spacing:0.08px;">440.000,00 €</div>
<div style="position:absolute;right:86.20px;top:99.62px;font-size:4.7px;line-height:5.64px;color:#3aa864;font-weight:normal;white-space:nowrap;text-align:right;-webkit-text-stroke:0.12px #3aa864;letter-spacing:0.08px;">100,0…</div>
<div style="position:absolute;right:38.60px;top:99.62px;font-size:4.7px;line-height:5.64px;color:#2a2c2e;font-weight:normal;white-space:nowrap;text-align:right;-webkit-text-stroke:0.12px #2a2c2e;letter-spacing:0.08px;">474.760,20 €</div>
<div style="position:absolute;right:15.60px;top:99.62px;font-size:4.7px;line-height:5.64px;color:#d2413c;font-weight:normal;white-space:nowrap;text-align:right;-webkit-text-stroke:0.12px #d2413c;letter-spacing:0.08px;">107,90%</div>
<div style="position:absolute;left:211.9px;top:108.72000000000001px;width:10.60px;height:8.76px;background:#7ee0a6;border-radius:0.5px;"></div>
<div style="position:absolute;left:583.8px;top:107.32000000000001px;width:46.50px;height:11.56px;background:#e9f7ee;"></div>
<div style="position:absolute;left:630.3px;top:107.32000000000001px;width:22.70px;height:11.56px;background:#e9f7ee;"></div>
<svg style="position:absolute;left:227px;top:111.62px" width="3" height="3" viewBox="0 0 3 3"><path d="M0.6 0.3 L2.2 1.5 L0.6 2.7" stroke="#444" stroke-width="0.5" fill="none"/></svg>
<div style="position:absolute;left:232px;top:111.18px;font-size:4.7px;line-height:5.64px;color:#1a1a1a;font-weight:normal;white-space:nowrap;-webkit-text-stroke:0.2px #1a1a1a;letter-spacing:0.1px;">200</div>
<div style="position:absolute;left:276px;top:111.18px;width:62px;overflow:hidden;text-overflow:ellipsis;font-size:4.7px;line-height:5.64px;color:#222;font-weight:normal;white-space:nowrap;letter-spacing:0.06px;-webkit-text-stroke:0.2px #222;">Vorbereitende Maßnahmen</div>
<div style="position:absolute;right:329.70px;top:111.18px;font-size:4.7px;line-height:5.64px;color:#2a2c2e;font-weight:normal;white-space:nowrap;text-align:right;-webkit-text-stroke:0.12px #2a2c2e;letter-spacing:0.08px;">15.360,00 €</div>
<div style="position:absolute;right:304.00px;top:111.18px;font-size:4.7px;line-height:5.64px;color:#2a2c2e;font-weight:normal;white-space:nowrap;text-align:right;-webkit-text-stroke:0.12px #2a2c2e;letter-spacing:0.08px;">100,00%</div>
<div style="position:absolute;right:259.70px;top:111.18px;font-size:4.7px;line-height:5.64px;color:#2a2c2e;font-weight:normal;white-space:nowrap;text-align:right;-webkit-text-stroke:0.12px #2a2c2e;letter-spacing:0.08px;">0,00 €</div>
<div style="position:absolute;right:232.40px;top:111.18px;font-size:4.7px;line-height:5.64px;color:#2a2c2e;font-weight:normal;white-space:nowrap;text-align:right;-webkit-text-stroke:0.12px #2a2c2e;letter-spacing:0.08px;">0,00%</div>
<div style="position:absolute;right:178.50px;top:111.18px;font-size:4.7px;line-height:5.64px;color:#2a2c2e;font-weight:normal;white-space:nowrap;text-align:right;-webkit-text-stroke:0.12px #2a2c2e;letter-spacing:0.08px;">0,00 €</div>
<div style="position:absolute;right:155.40px;top:111.18px;font-size:4.7px;line-height:5.64px;color:#2a2c2e;font-weight:normal;white-space:nowrap;text-align:right;-webkit-text-stroke:0.12px #2a2c2e;letter-spacing:0.08px;">0,00%</div>
<div style="position:absolute;right:108.90px;top:111.18px;font-size:4.7px;line-height:5.64px;color:#3aa864;font-weight:normal;white-space:nowrap;text-align:right;-webkit-text-stroke:0.12px #3aa864;letter-spacing:0.08px;">15.360,00 €</div>
<div style="position:absolute;right:86.20px;top:111.18px;font-size:4.7px;line-height:5.64px;color:#3aa864;font-weight:normal;white-space:nowrap;text-align:right;-webkit-text-stroke:0.12px #3aa864;letter-spacing:0.08px;">100,0…</div>
<div style="position:absolute;right:38.60px;top:111.18px;font-size:4.7px;line-height:5.64px;color:#2a2c2e;font-weight:normal;white-space:nowrap;text-align:right;-webkit-text-stroke:0.12px #2a2c2e;letter-spacing:0.08px;">15.360,00 €</div>
<div style="position:absolute;right:15.60px;top:111.18px;font-size:4.7px;line-height:5.64px;color:#2a2c2e;font-weight:normal;white-space:nowrap;text-align:right;-webkit-text-stroke:0.12px #2a2c2e;letter-spacing:0.08px;">100,0…</div>
<div style="position:absolute;left:479.5px;top:118.88px;width:27.30px;height:11.56px;background:#e9f7ee;"></div>
<div style="position:absolute;left:560.7px;top:118.88px;width:23.10px;height:11.56px;background:#e9f7ee;"></div>
<div style="position:absolute;left:583.8px;top:118.88px;width:46.50px;height:11.56px;background:#e9f7ee;"></div>
<div style="position:absolute;left:630.3px;top:118.88px;width:22.70px;height:11.56px;background:#e9f7ee;"></div>
<div style="position:absolute;left:700.6px;top:118.88px;width:23.00px;height:11.56px;background:#fbe9e9;"></div>
<svg style="position:absolute;left:226.5px;top:123.47999999999999px" width="3" height="3" viewBox="0 0 3 3"><path d="M0.3 0.6 L1.5 2.2 L2.7 0.6" stroke="#444" stroke-width="0.5" fill="none"/></svg>
<div style="position:absolute;left:232px;top:122.74px;font-size:4.7px;line-height:5.64px;color:#1a1a1a;font-weight:normal;white-space:nowrap;-webkit-text-stroke:0.2px #1a1a1a;letter-spacing:0.1px;">300</div>
<div style="position:absolute;left:276px;top:122.74px;width:62px;overflow:hidden;text-overflow:ellipsis;font-size:4.7px;line-height:5.64px;color:#222;font-weight:normal;white-space:nowrap;letter-spacing:0.06px;-webkit-text-stroke:0.2px #222;">Bauwerk - Baukonstruktionen</div>
<div style="position:absolute;right:329.70px;top:122.74px;font-size:4.7px;line-height:5.64px;color:#2a2c2e;font-weight:normal;white-space:nowrap;text-align:right;-webkit-text-stroke:0.12px #2a2c2e;letter-spacing:0.08px;">816.010,61 €</div>
<div style="position:absolute;right:304.00px;top:122.74px;font-size:4.7px;line-height:5.64px;color:#2a2c2e;font-weight:normal;white-space:nowrap;text-align:right;-webkit-text-stroke:0.12px #2a2c2e;letter-spacing:0.08px;">100,00%</div>
<div style="position:absolute;right:259.70px;top:122.74px;font-size:4.7px;line-height:5.64px;color:#2a2c2e;font-weight:normal;white-space:nowrap;text-align:right;-webkit-text-stroke:0.12px #2a2c2e;letter-spacing:0.08px;">871.561,01 €</div>
<div style="position:absolute;right:232.40px;top:122.74px;font-size:4.7px;line-height:5.64px;color:#3aa864;font-weight:normal;white-space:nowrap;text-align:right;-webkit-text-stroke:0.12px #3aa864;letter-spacing:0.08px;">95,04%</div>
<div style="position:absolute;right:178.50px;top:122.74px;font-size:4.7px;line-height:5.64px;color:#2a2c2e;font-weight:normal;white-space:nowrap;text-align:right;-webkit-text-stroke:0.12px #2a2c2e;letter-spacing:0.08px;">147.326,00 €</div>
<div style="position:absolute;right:155.40px;top:122.74px;font-size:4.7px;line-height:5.64px;color:#3aa864;font-weight:normal;white-space:nowrap;text-align:right;-webkit-text-stroke:0.12px #3aa864;letter-spacing:0.08px;">16,05%</div>
<div style="position:absolute;right:108.90px;top:122.74px;font-size:4.7px;line-height:5.64px;color:#3aa864;font-weight:normal;white-space:nowrap;text-align:right;-webkit-text-stroke:0.12px #3aa864;letter-spacing:0.08px;">33.915,00 €</div>
<div style="position:absolute;right:86.20px;top:122.74px;font-size:4.7px;line-height:5.64px;color:#3aa864;font-weight:normal;white-space:nowrap;text-align:right;-webkit-text-stroke:0.12px #3aa864;letter-spacing:0.08px;">3,37%</div>
<div style="position:absolute;right:38.60px;top:122.74px;font-size:4.7px;line-height:5.64px;color:#2a2c2e;font-weight:normal;white-space:nowrap;text-align:right;-webkit-text-stroke:0.12px #2a2c2e;letter-spacing:0.08px;">1.410.905,36 €</div>
<div style="position:absolute;right:15.60px;top:122.74px;font-size:4.7px;line-height:5.64px;color:#d2413c;font-weight:normal;white-space:nowrap;text-align:right;-webkit-text-stroke:0.12px #d2413c;letter-spacing:0.08px;">154,51%</div>
<div style="position:absolute;left:583.8px;top:130.44px;width:46.50px;height:11.56px;background:#e9f7ee;"></div>
<div style="position:absolute;left:630.3px;top:130.44px;width:22.70px;height:11.56px;background:#e9f7ee;"></div>
<svg style="position:absolute;left:233px;top:134.74px" width="3" height="3" viewBox="0 0 3 3"><path d="M0.6 0.3 L2.2 1.5 L0.6 2.7" stroke="#444" stroke-width="0.5" fill="none"/></svg>
<div style="position:absolute;left:238px;top:134.3px;font-size:4.7px;line-height:5.64px;color:#1a1a1a;font-weight:normal;white-space:nowrap;-webkit-text-stroke:0.2px #1a1a1a;letter-spacing:0.1px;">310</div>
<div style="position:absolute;left:276px;top:134.3px;width:62px;overflow:hidden;text-overflow:ellipsis;font-size:4.7px;line-height:5.64px;color:#222;font-weight:normal;white-space:nowrap;letter-spacing:0.06px;-webkit-text-stroke:0.2px #222;">Baugrube/Erdbau</div>
<div style="position:absolute;right:329.70px;top:134.3px;font-size:4.7px;line-height:5.64px;color:#2a2c2e;font-weight:normal;white-space:nowrap;text-align:right;-webkit-text-stroke:0.12px #2a2c2e;letter-spacing:0.08px;">5.900,00 €</div>
<div style="position:absolute;right:304.00px;top:134.3px;font-size:4.7px;line-height:5.64px;color:#2a2c2e;font-weight:normal;white-space:nowrap;text-align:right;-webkit-text-stroke:0.12px #2a2c2e;letter-spacing:0.08px;">100,00%</div>
<div style="position:absolute;right:259.70px;top:134.3px;font-size:4.7px;line-height:5.64px;color:#2a2c2e;font-weight:normal;white-space:nowrap;text-align:right;-webkit-text-stroke:0.12px #2a2c2e;letter-spacing:0.08px;">0,00 €</div>
<div style="position:absolute;right:232.40px;top:134.3px;font-size:4.7px;line-height:5.64px;color:#2a2c2e;font-weight:normal;white-space:nowrap;text-align:right;-webkit-text-stroke:0.12px #2a2c2e;letter-spacing:0.08px;">0,00%</div>
<div style="position:absolute;right:178.50px;top:134.3px;font-size:4.7px;line-height:5.64px;color:#2a2c2e;font-weight:normal;white-space:nowrap;text-align:right;-webkit-text-stroke:0.12px #2a2c2e;letter-spacing:0.08px;">0,00 €</div>
<div style="position:absolute;right:155.40px;top:134.3px;font-size:4.7px;line-height:5.64px;color:#2a2c2e;font-weight:normal;white-space:nowrap;text-align:right;-webkit-text-stroke:0.12px #2a2c2e;letter-spacing:0.08px;">0,00%</div>
<div style="position:absolute;right:108.90px;top:134.3px;font-size:4.7px;line-height:5.64px;color:#3aa864;font-weight:normal;white-space:nowrap;text-align:right;-webkit-text-stroke:0.12px #3aa864;letter-spacing:0.08px;">5.900,00 €</div>
<div style="position:absolute;right:86.20px;top:134.3px;font-size:4.7px;line-height:5.64px;color:#3aa864;font-weight:normal;white-space:nowrap;text-align:right;-webkit-text-stroke:0.12px #3aa864;letter-spacing:0.08px;">100,0…</div>
<div style="position:absolute;right:38.60px;top:134.3px;font-size:4.7px;line-height:5.64px;color:#2a2c2e;font-weight:normal;white-space:nowrap;text-align:right;-webkit-text-stroke:0.12px #2a2c2e;letter-spacing:0.08px;">5.900,00 €</div>
<div style="position:absolute;right:15.60px;top:134.3px;font-size:4.7px;line-height:5.64px;color:#2a2c2e;font-weight:normal;white-space:nowrap;text-align:right;-webkit-text-stroke:0.12px #2a2c2e;letter-spacing:0.08px;">100,0…</div>
<div style="position:absolute;left:211.9px;top:143.4px;width:10.60px;height:8.76px;background:#8dc3ec;border-radius:0.5px;"></div>
<div style="position:absolute;left:479.5px;top:142.0px;width:27.30px;height:11.56px;background:#e9f7ee;"></div>
<div style="position:absolute;left:560.7px;top:142.0px;width:23.10px;height:11.56px;background:#e9f7ee;"></div>
<div style="position:absolute;left:583.8px;top:142.0px;width:46.50px;height:11.56px;background:#e9f7ee;"></div>
<div style="position:absolute;left:630.3px;top:142.0px;width:22.70px;height:11.56px;background:#e9f7ee;"></div>
<div style="position:absolute;left:700.6px;top:142.0px;width:23.00px;height:11.56px;background:#fbe9e9;"></div>
<svg style="position:absolute;left:232.5px;top:146.6px" width="3" height="3" viewBox="0 0 3 3"><path d="M0.3 0.6 L1.5 2.2 L2.7 0.6" stroke="#444" stroke-width="0.5" fill="none"/></svg>
<div style="position:absolute;left:238px;top:145.86px;font-size:4.7px;line-height:5.64px;color:#1a1a1a;font-weight:normal;white-space:nowrap;-webkit-text-stroke:0.2px #1a1a1a;letter-spacing:0.1px;">320</div>
<div style="position:absolute;left:276px;top:145.86px;width:62px;overflow:hidden;text-overflow:ellipsis;font-size:4.7px;line-height:5.64px;color:#222;font-weight:normal;white-space:nowrap;letter-spacing:0.06px;-webkit-text-stroke:0.2px #222;">Gründung, Unterbau</div>
<div style="position:absolute;right:329.70px;top:145.86px;font-size:4.7px;line-height:5.64px;color:#2a2c2e;font-weight:normal;white-space:nowrap;text-align:right;-webkit-text-stroke:0.12px #2a2c2e;letter-spacing:0.08px;">187.376,87 €</div>
<div style="position:absolute;right:304.00px;top:145.86px;font-size:4.7px;line-height:5.64px;color:#2a2c2e;font-weight:normal;white-space:nowrap;text-align:right;-webkit-text-stroke:0.12px #2a2c2e;letter-spacing:0.08px;">100,00%</div>
<div style="position:absolute;right:259.70px;top:145.86px;font-size:4.7px;line-height:5.64px;color:#2a2c2e;font-weight:normal;white-space:nowrap;text-align:right;-webkit-text-stroke:0.12px #2a2c2e;letter-spacing:0.08px;">94.299,00 €</div>
<div style="position:absolute;right:232.40px;top:145.86px;font-size:4.7px;line-height:5.64px;color:#3aa864;font-weight:normal;white-space:nowrap;text-align:right;-webkit-text-stroke:0.12px #3aa864;letter-spacing:0.08px;">45,16%</div>
<div style="position:absolute;right:178.50px;top:145.86px;font-size:4.7px;line-height:5.64px;color:#2a2c2e;font-weight:normal;white-space:nowrap;text-align:right;-webkit-text-stroke:0.12px #2a2c2e;letter-spacing:0.08px;">34.950,00 €</div>
<div style="position:absolute;right:155.40px;top:145.86px;font-size:4.7px;line-height:5.64px;color:#3aa864;font-weight:normal;white-space:nowrap;text-align:right;-webkit-text-stroke:0.12px #3aa864;letter-spacing:0.08px;">16,57%</div>
<div style="position:absolute;right:108.90px;top:145.86px;font-size:4.7px;line-height:5.64px;color:#3aa864;font-weight:normal;white-space:nowrap;text-align:right;-webkit-text-stroke:0.12px #3aa864;letter-spacing:0.08px;">94.066,87 €</div>
<div style="position:absolute;right:86.20px;top:145.86px;font-size:4.7px;line-height:5.64px;color:#3aa864;font-weight:normal;white-space:nowrap;text-align:right;-webkit-text-stroke:0.12px #3aa864;letter-spacing:0.08px;">58,45%</div>
<div style="position:absolute;right:38.60px;top:145.86px;font-size:4.7px;line-height:5.64px;color:#2a2c2e;font-weight:normal;white-space:nowrap;text-align:right;-webkit-text-stroke:0.12px #2a2c2e;letter-spacing:0.08px;">190.910,05 €</div>
<div style="position:absolute;right:15.60px;top:145.86px;font-size:4.7px;line-height:5.64px;color:#d2413c;font-weight:normal;white-space:nowrap;text-align:right;-webkit-text-stroke:0.12px #d2413c;letter-spacing:0.08px;">100,06%</div>
<div style="position:absolute;left:211.9px;top:154.96px;width:10.60px;height:8.76px;background:#8dc3ec;border-radius:0.5px;"></div>
<div style="position:absolute;left:479.5px;top:153.56px;width:27.30px;height:11.56px;background:#e9f7ee;"></div>
<div style="position:absolute;left:560.7px;top:153.56px;width:23.10px;height:11.56px;background:#e9f7ee;"></div>
<div style="position:absolute;left:583.8px;top:153.56px;width:46.50px;height:11.56px;background:#e9f7ee;"></div>
<div style="position:absolute;left:630.3px;top:153.56px;width:22.70px;height:11.56px;background:#e9f7ee;"></div>
<div style="position:absolute;left:244.2px;top:157.42000000000002px;font-size:4.7px;line-height:5.64px;color:#1a1a1a;font-weight:normal;white-space:nowrap;-webkit-text-stroke:0.2px #1a1a1a;letter-spacing:0.1px;">322</div>
<svg style="position:absolute;left:271.4px;top:158.16px" width="3" height="3" viewBox="0 0 3 3"><path d="M0.3 0.6 L1.5 2.2 L2.7 0.6" stroke="#444" stroke-width="0.5" fill="none"/></svg>
<div style="position:absolute;left:276px;top:157.42000000000002px;width:62px;overflow:hidden;text-overflow:ellipsis;font-size:4.7px;line-height:5.64px;color:#222;font-weight:normal;white-space:nowrap;letter-spacing:0.06px;-webkit-text-stroke:0.2px #222;">Flachgründungen und Bodenplatten</div>
<div style="position:absolute;right:329.70px;top:157.42000000000002px;font-size:4.7px;line-height:5.64px;color:#2a2c2e;font-weight:normal;white-space:nowrap;text-align:right;-webkit-text-stroke:0.12px #2a2c2e;letter-spacing:0.08px;">147.865,36 €</div>
<div style="position:absolute;right:304.00px;top:157.42000000000002px;font-size:4.7px;line-height:5.64px;color:#2a2c2e;font-weight:normal;white-space:nowrap;text-align:right;-webkit-text-stroke:0.12px #2a2c2e;letter-spacing:0.08px;">100,00%</div>
<div style="position:absolute;right:259.70px;top:157.42000000000002px;font-size:4.7px;line-height:5.64px;color:#2a2c2e;font-weight:normal;white-space:nowrap;text-align:right;-webkit-text-stroke:0.12px #2a2c2e;letter-spacing:0.08px;">83.135,88 €</div>
<div style="position:absolute;right:232.40px;top:157.42000000000002px;font-size:4.7px;line-height:5.64px;color:#3aa864;font-weight:normal;white-space:nowrap;text-align:right;-webkit-text-stroke:0.12px #3aa864;letter-spacing:0.08px;">33,71%</div>
<div style="position:absolute;right:178.50px;top:157.42000000000002px;font-size:4.7px;line-height:5.64px;color:#2a2c2e;font-weight:normal;white-space:nowrap;text-align:right;-webkit-text-stroke:0.12px #2a2c2e;letter-spacing:0.08px;">34.680,00 €</div>
<div style="position:absolute;right:155.40px;top:157.42000000000002px;font-size:4.7px;line-height:5.64px;color:#3aa864;font-weight:normal;white-space:nowrap;text-align:right;-webkit-text-stroke:0.12px #3aa864;letter-spacing:0.08px;">23,67%</div>
<div style="position:absolute;right:108.90px;top:157.42000000000002px;font-size:4.7px;line-height:5.64px;color:#3aa864;font-weight:normal;white-space:nowrap;text-align:right;-webkit-text-stroke:0.12px #3aa864;letter-spacing:0.08px;">71.205,41 €</div>
<div style="position:absolute;right:86.20px;top:157.42000000000002px;font-size:4.7px;line-height:5.64px;color:#3aa864;font-weight:normal;white-space:nowrap;text-align:right;-webkit-text-stroke:0.12px #3aa864;letter-spacing:0.08px;">80,83%</div>
<div style="position:absolute;right:38.60px;top:157.42000000000002px;font-size:4.7px;line-height:5.64px;color:#2a2c2e;font-weight:normal;white-space:nowrap;text-align:right;-webkit-text-stroke:0.12px #2a2c2e;letter-spacing:0.08px;">187.656,48 €</div>
<div style="position:absolute;right:15.60px;top:157.42000000000002px;font-size:4.7px;line-height:5.64px;color:#2a2c2e;font-weight:normal;white-space:nowrap;text-align:right;-webkit-text-stroke:0.12px #2a2c2e;letter-spacing:0.08px;">100,0…</div>
<div style="position:absolute;left:267.8px;top:165.12px;width:455.80px;height:11.56px;background:#e4eefa;"></div>
<div style="position:absolute;left:210px;top:165.12px;width:13.60px;height:11.56px;background:#f7f9fb;"></div>
<div style="position:absolute;left:223.6px;top:165.12px;width:44.20px;height:11.56px;background:#ebf3fb;"></div>
<div style="position:absolute;left:211.9px;top:166.52px;width:10.60px;height:8.76px;background:#8dc3ec;border-radius:0.5px;"></div>
<svg style="position:absolute;left:277.4px;top:169.72px" width="3" height="3" viewBox="0 0 3 3"><path d="M0.3 0.6 L1.5 2.2 L2.7 0.6" stroke="#444" stroke-width="0.5" fill="none"/></svg>
<div style="position:absolute;left:282px;top:168.98000000000002px;width:56px;overflow:hidden;text-overflow:ellipsis;font-size:4.7px;line-height:5.64px;color:#222;font-weight:normal;white-space:nowrap;letter-spacing:0.06px;-webkit-text-stroke:0.2px #222;font-weight:normal;">013 - Beton- und Stahlbetonarbeiten</div>
<svg style="position:absolute;left:343.2px;top:168.42000000000002px" width="5" height="5" viewBox="0 0 5 5"><rect x="1" y="0.4" width="3" height="4.2" stroke="#888" stroke-width="0.45" fill="none"/></svg>
<div style="position:absolute;right:329.70px;top:168.98000000000002px;font-size:4.7px;line-height:5.64px;color:#2a2c2e;font-weight:normal;white-space:nowrap;text-align:right;-webkit-text-stroke:0.12px #2a2c2e;letter-spacing:0.08px;">0,00 €</div>
<div style="position:absolute;right:304.00px;top:168.98000000000002px;font-size:4.7px;line-height:5.64px;color:#2a2c2e;font-weight:normal;white-space:nowrap;text-align:right;-webkit-text-stroke:0.12px #2a2c2e;letter-spacing:0.08px;">0,00%</div>
<div style="position:absolute;right:259.70px;top:168.98000000000002px;font-size:4.7px;line-height:5.64px;color:#2a2c2e;font-weight:normal;white-space:nowrap;text-align:right;-webkit-text-stroke:0.12px #2a2c2e;letter-spacing:0.08px;">62.444,05 €</div>
<div style="position:absolute;right:232.40px;top:168.98000000000002px;font-size:4.7px;line-height:5.64px;color:#2a2c2e;font-weight:normal;white-space:nowrap;text-align:right;-webkit-text-stroke:0.12px #2a2c2e;letter-spacing:0.08px;">0,00%</div>
<div style="position:absolute;right:178.50px;top:168.98000000000002px;font-size:4.7px;line-height:5.64px;color:#2a2c2e;font-weight:normal;white-space:nowrap;text-align:right;-webkit-text-stroke:0.12px #2a2c2e;letter-spacing:0.08px;">34.950,00 €</div>
<div style="position:absolute;right:155.40px;top:168.98000000000002px;font-size:4.7px;line-height:5.64px;color:#2a2c2e;font-weight:normal;white-space:nowrap;text-align:right;-webkit-text-stroke:0.12px #2a2c2e;letter-spacing:0.08px;">0,00%</div>
<div style="position:absolute;right:108.90px;top:168.98000000000002px;font-size:4.7px;line-height:5.64px;color:#d2413c;font-weight:normal;white-space:nowrap;text-align:right;-webkit-text-stroke:0.12px #d2413c;letter-spacing:0.08px;">-70.334,05 €</div>
<div style="position:absolute;right:86.20px;top:168.98000000000002px;font-size:4.7px;line-height:5.64px;color:#2a2c2e;font-weight:normal;white-space:nowrap;text-align:right;-webkit-text-stroke:0.12px #2a2c2e;letter-spacing:0.08px;">0,00%</div>
<div style="position:absolute;right:38.60px;top:168.98000000000002px;font-size:4.7px;line-height:5.64px;color:#2a2c2e;font-weight:normal;white-space:nowrap;text-align:right;-webkit-text-stroke:0.12px #2a2c2e;letter-spacing:0.08px;">70.334,05 €</div>
<div style="position:absolute;right:15.60px;top:168.98000000000002px;font-size:4.7px;line-height:5.64px;color:#2a2c2e;font-weight:normal;white-space:nowrap;text-align:right;-webkit-text-stroke:0.12px #2a2c2e;letter-spacing:0.08px;">0,00%</div>
<div style="position:absolute;left:210px;top:176.68px;width:513.60px;height:11.56px;background:#f8f9fa;"></div>
<div style="position:absolute;left:583.8px;top:176.68px;width:46.50px;height:11.56px;background:#fbe9e9;"></div>
<div style="position:absolute;left:282px;top:180.54000000000002px;width:56px;overflow:hidden;text-overflow:ellipsis;font-size:4.7px;line-height:5.64px;color:#555;font-weight:normal;white-space:nowrap;letter-spacing:0.06px;">013.0010 - Fundament, Beton C25/30</div>
<svg style="position:absolute;left:343.2px;top:179.98000000000002px" width="5" height="5" viewBox="0 0 5 5"><path d="M0.8 1.6 H4.2 M0.8 2.8 H3" stroke="#c4c7ca" stroke-width="0.5"/></svg>
<div style="position:absolute;right:329.70px;top:180.54000000000002px;font-size:4.7px;line-height:5.64px;color:#505457;font-weight:normal;white-space:nowrap;text-align:right;letter-spacing:0.08px;">0,00 €</div>
<div style="position:absolute;right:304.00px;top:180.54000000000002px;font-size:4.7px;line-height:5.64px;color:#505457;font-weight:normal;white-space:nowrap;text-align:right;letter-spacing:0.08px;">0,00%</div>
<div style="position:absolute;right:259.70px;top:180.54000000000002px;font-size:4.7px;line-height:5.64px;color:#505457;font-weight:normal;white-space:nowrap;text-align:right;letter-spacing:0.08px;">19.489,19 €</div>
<div style="position:absolute;right:232.40px;top:180.54000000000002px;font-size:4.7px;line-height:5.64px;color:#505457;font-weight:normal;white-space:nowrap;text-align:right;letter-spacing:0.08px;">0,00%</div>
<div style="position:absolute;right:178.50px;top:180.54000000000002px;font-size:4.7px;line-height:5.64px;color:#505457;font-weight:normal;white-space:nowrap;text-align:right;letter-spacing:0.08px;">17.703,00 €</div>
<div style="position:absolute;right:155.40px;top:180.54000000000002px;font-size:4.7px;line-height:5.64px;color:#505457;font-weight:normal;white-space:nowrap;text-align:right;letter-spacing:0.08px;">0,00%</div>
<div style="position:absolute;right:108.90px;top:180.54000000000002px;font-size:4.7px;line-height:5.64px;color:#d2413c;font-weight:normal;white-space:nowrap;text-align:right;letter-spacing:0.08px;">-19.489,19 €</div>
<div style="position:absolute;right:86.20px;top:180.54000000000002px;font-size:4.7px;line-height:5.64px;color:#505457;font-weight:normal;white-space:nowrap;text-align:right;letter-spacing:0.08px;">0,00%</div>
<div style="position:absolute;right:38.60px;top:180.54000000000002px;font-size:4.7px;line-height:5.64px;color:#505457;font-weight:normal;white-space:nowrap;text-align:right;letter-spacing:0.08px;">19.489,19 €</div>
<div style="position:absolute;right:15.60px;top:180.54000000000002px;font-size:4.7px;line-height:5.64px;color:#505457;font-weight:normal;white-space:nowrap;text-align:right;letter-spacing:0.08px;">0,00%</div>
<div style="position:absolute;left:210px;top:188.24px;width:513.60px;height:11.56px;background:#f8f9fa;"></div>
<div style="position:absolute;left:211.9px;top:189.64000000000001px;width:10.60px;height:8.76px;background:#8dc3ec;border-radius:0.5px;"></div>
<div style="position:absolute;left:583.8px;top:188.24px;width:46.50px;height:11.56px;background:#fbe9e9;"></div>
<div style="position:absolute;left:282px;top:192.10000000000002px;width:56px;overflow:hidden;text-overflow:ellipsis;font-size:4.7px;line-height:5.64px;color:#555;font-weight:normal;white-space:nowrap;letter-spacing:0.06px;">013.0020 - Bodenplatte, Beton</div>
<svg style="position:absolute;left:343.2px;top:191.54000000000002px" width="5" height="5" viewBox="0 0 5 5"><path d="M0.8 1 H4.2 M0.8 2.5 H4.2 M0.8 4 H4.2" stroke="#aaa" stroke-width="0.45"/></svg>
<div style="position:absolute;right:329.70px;top:192.10000000000002px;font-size:4.7px;line-height:5.64px;color:#505457;font-weight:normal;white-space:nowrap;text-align:right;letter-spacing:0.08px;">0,00 €</div>
<div style="position:absolute;right:304.00px;top:192.10000000000002px;font-size:4.7px;line-height:5.64px;color:#505457;font-weight:normal;white-space:nowrap;text-align:right;letter-spacing:0.08px;">0,00%</div>
<div style="position:absolute;right:259.70px;top:192.10000000000002px;font-size:4.7px;line-height:5.64px;color:#505457;font-weight:normal;white-space:nowrap;text-align:right;letter-spacing:0.08px;">27.063,06 €</div>
<div style="position:absolute;right:232.40px;top:192.10000000000002px;font-size:4.7px;line-height:5.64px;color:#505457;font-weight:normal;white-space:nowrap;text-align:right;letter-spacing:0.08px;">0,00%</div>
<div style="position:absolute;right:178.50px;top:192.10000000000002px;font-size:4.7px;line-height:5.64px;color:#505457;font-weight:normal;white-space:nowrap;text-align:right;letter-spacing:0.08px;">17.003,00 €</div>
<div style="position:absolute;right:155.40px;top:192.10000000000002px;font-size:4.7px;line-height:5.64px;color:#505457;font-weight:normal;white-space:nowrap;text-align:right;letter-spacing:0.08px;">0,00%</div>
<div style="position:absolute;right:108.90px;top:192.10000000000002px;font-size:4.7px;line-height:5.64px;color:#d2413c;font-weight:normal;white-space:nowrap;text-align:right;letter-spacing:0.08px;">-26.000,00 €</div>
<div style="position:absolute;right:86.20px;top:192.10000000000002px;font-size:4.7px;line-height:5.64px;color:#505457;font-weight:normal;white-space:nowrap;text-align:right;letter-spacing:0.08px;">0,00%</div>
<div style="position:absolute;right:38.60px;top:192.10000000000002px;font-size:4.7px;line-height:5.64px;color:#505457;font-weight:normal;white-space:nowrap;text-align:right;letter-spacing:0.08px;">26.063,06 €</div>
<div style="position:absolute;right:15.60px;top:192.10000000000002px;font-size:4.7px;line-height:5.64px;color:#505457;font-weight:normal;white-space:nowrap;text-align:right;letter-spacing:0.08px;">0,00%</div>
<div style="position:absolute;left:210px;top:199.8px;width:513.60px;height:11.56px;background:#f8f9fa;"></div>
<div style="position:absolute;left:583.8px;top:199.8px;width:46.50px;height:11.56px;background:#fbe9e9;"></div>
<div style="position:absolute;left:282px;top:203.66000000000003px;width:56px;overflow:hidden;text-overflow:ellipsis;font-size:4.7px;line-height:5.64px;color:#555;font-weight:normal;white-space:nowrap;letter-spacing:0.06px;">013.0150 - Schalung, Bodenplatte</div>
<svg style="position:absolute;left:343.2px;top:203.10000000000002px" width="5" height="5" viewBox="0 0 5 5"><path d="M0.8 1.6 H4.2 M0.8 2.8 H3" stroke="#c4c7ca" stroke-width="0.5"/></svg>
<div style="position:absolute;right:329.70px;top:203.66000000000003px;font-size:4.7px;line-height:5.64px;color:#505457;font-weight:normal;white-space:nowrap;text-align:right;letter-spacing:0.08px;">0,00 €</div>
<div style="position:absolute;right:304.00px;top:203.66000000000003px;font-size:4.7px;line-height:5.64px;color:#505457;font-weight:normal;white-space:nowrap;text-align:right;letter-spacing:0.08px;">0,00%</div>
<div style="position:absolute;right:259.70px;top:203.66000000000003px;font-size:4.7px;line-height:5.64px;color:#505457;font-weight:normal;white-space:nowrap;text-align:right;letter-spacing:0.08px;">1.391,49 €</div>
<div style="position:absolute;right:232.40px;top:203.66000000000003px;font-size:4.7px;line-height:5.64px;color:#505457;font-weight:normal;white-space:nowrap;text-align:right;letter-spacing:0.08px;">0,00%</div>
<div style="position:absolute;right:178.50px;top:203.66000000000003px;font-size:4.7px;line-height:5.64px;color:#505457;font-weight:normal;white-space:nowrap;text-align:right;letter-spacing:0.08px;">0,00 €</div>
<div style="position:absolute;right:155.40px;top:203.66000000000003px;font-size:4.7px;line-height:5.64px;color:#505457;font-weight:normal;white-space:nowrap;text-align:right;letter-spacing:0.08px;">0,00%</div>
<div style="position:absolute;right:108.90px;top:203.66000000000003px;font-size:4.7px;line-height:5.64px;color:#d2413c;font-weight:normal;white-space:nowrap;text-align:right;letter-spacing:0.08px;">-1.391,49 €</div>
<div style="position:absolute;right:86.20px;top:203.66000000000003px;font-size:4.7px;line-height:5.64px;color:#505457;font-weight:normal;white-space:nowrap;text-align:right;letter-spacing:0.08px;">0,00%</div>
<div style="position:absolute;right:38.60px;top:203.66000000000003px;font-size:4.7px;line-height:5.64px;color:#505457;font-weight:normal;white-space:nowrap;text-align:right;letter-spacing:0.08px;">1.391,49 €</div>
<div style="position:absolute;right:15.60px;top:203.66000000000003px;font-size:4.7px;line-height:5.64px;color:#505457;font-weight:normal;white-space:nowrap;text-align:right;letter-spacing:0.08px;">0,00%</div>
<div style="position:absolute;left:210px;top:211.36px;width:513.60px;height:11.56px;background:#f8f9fa;"></div>
<div style="position:absolute;left:583.8px;top:211.36px;width:46.50px;height:11.56px;background:#fbe9e9;"></div>
<div style="position:absolute;left:282px;top:215.22000000000003px;width:56px;overflow:hidden;text-overflow:ellipsis;font-size:4.7px;line-height:5.64px;color:#555;font-weight:normal;white-space:nowrap;letter-spacing:0.06px;">013.0250 - Bodenplatte, Dämmung</div>
<svg style="position:absolute;left:343.2px;top:214.66000000000003px" width="5" height="5" viewBox="0 0 5 5"><path d="M0.8 1 H4.2 M0.8 2.5 H4.2 M0.8 4 H4.2" stroke="#aaa" stroke-width="0.45"/></svg>
<div style="position:absolute;right:329.70px;top:215.22000000000003px;font-size:4.7px;line-height:5.64px;color:#505457;font-weight:normal;white-space:nowrap;text-align:right;letter-spacing:0.08px;">0,00 €</div>
<div style="position:absolute;right:304.00px;top:215.22000000000003px;font-size:4.7px;line-height:5.64px;color:#505457;font-weight:normal;white-space:nowrap;text-align:right;letter-spacing:0.08px;">0,00%</div>
<div style="position:absolute;right:259.70px;top:215.22000000000003px;font-size:4.7px;line-height:5.64px;color:#505457;font-weight:normal;white-space:nowrap;text-align:right;letter-spacing:0.08px;">7.953,06 €</div>
<div style="position:absolute;right:232.40px;top:215.22000000000003px;font-size:4.7px;line-height:5.64px;color:#505457;font-weight:normal;white-space:nowrap;text-align:right;letter-spacing:0.08px;">0,00%</div>
<div style="position:absolute;right:178.50px;top:215.22000000000003px;font-size:4.7px;line-height:5.64px;color:#505457;font-weight:normal;white-space:nowrap;text-align:right;letter-spacing:0.08px;">0,00 €</div>
<div style="position:absolute;right:155.40px;top:215.22000000000003px;font-size:4.7px;line-height:5.64px;color:#505457;font-weight:normal;white-space:nowrap;text-align:right;letter-spacing:0.08px;">0,00%</div>
<div style="position:absolute;right:108.90px;top:215.22000000000003px;font-size:4.7px;line-height:5.64px;color:#d2413c;font-weight:normal;white-space:nowrap;text-align:right;letter-spacing:0.08px;">-7.953,06 €</div>
<div style="position:absolute;right:86.20px;top:215.22000000000003px;font-size:4.7px;line-height:5.64px;color:#505457;font-weight:normal;white-space:nowrap;text-align:right;letter-spacing:0.08px;">0,00%</div>
<div style="position:absolute;right:38.60px;top:215.22000000000003px;font-size:4.7px;line-height:5.64px;color:#505457;font-weight:normal;white-space:nowrap;text-align:right;letter-spacing:0.08px;">7.953,06 €</div>
<div style="position:absolute;right:15.60px;top:215.22000000000003px;font-size:4.7px;line-height:5.64px;color:#505457;font-weight:normal;white-space:nowrap;text-align:right;letter-spacing:0.08px;">0,00%</div>
<div style="position:absolute;left:210px;top:222.92000000000002px;width:513.60px;height:11.56px;background:#fbf8ea;"></div>
<div style="position:absolute;left:275.4px;top:226.78000000000003px;width:62.60000000000002px;overflow:hidden;text-overflow:ellipsis;font-size:4.7px;line-height:5.64px;color:#55595d;font-weight:normal;white-space:nowrap;letter-spacing:0.06px;"><span style="font-size:4.1px">Zuordnung (Bedarfsposition)</span></div>
<svg style="position:absolute;left:343.2px;top:226.22000000000003px" width="5" height="5" viewBox="0 0 5 5"><circle cx="2.5" cy="2.5" r="1.6" stroke="#888" stroke-width="0.6" fill="none"/></svg>
<div style="position:absolute;right:259.70px;top:226.78000000000003px;font-size:4.7px;line-height:5.64px;color:#606468;font-weight:normal;white-space:nowrap;text-align:right;letter-spacing:0.08px;">195,00 €</div>
<div style="position:absolute;right:232.40px;top:226.78000000000003px;font-size:4.7px;line-height:5.64px;color:#606468;font-weight:normal;white-space:nowrap;text-align:right;letter-spacing:0.08px;">0,00%</div>
<div style="position:absolute;right:178.50px;top:226.78000000000003px;font-size:4.7px;line-height:5.64px;color:#606468;font-weight:normal;white-space:nowrap;text-align:right;letter-spacing:0.08px;">195,00 €</div>
<div style="position:absolute;right:155.40px;top:226.78000000000003px;font-size:4.7px;line-height:5.64px;color:#606468;font-weight:normal;white-space:nowrap;text-align:right;letter-spacing:0.08px;">0,00%</div>
<div style="position:absolute;right:108.90px;top:226.78000000000003px;font-size:4.7px;line-height:5.64px;color:#606468;font-weight:normal;white-space:nowrap;text-align:right;letter-spacing:0.08px;">0,00 €</div>
<div style="position:absolute;right:86.20px;top:226.78000000000003px;font-size:4.7px;line-height:5.64px;color:#606468;font-weight:normal;white-space:nowrap;text-align:right;letter-spacing:0.08px;">0,00%</div>
<div style="position:absolute;right:38.60px;top:226.78000000000003px;font-size:4.7px;line-height:5.64px;color:#606468;font-weight:normal;white-space:nowrap;text-align:right;letter-spacing:0.08px;">0,00 €</div>
<div style="position:absolute;right:15.60px;top:226.78000000000003px;font-size:4.7px;line-height:5.64px;color:#606468;font-weight:normal;white-space:nowrap;text-align:right;letter-spacing:0.08px;">0,00%</div>
<div style="position:absolute;left:211.9px;top:235.88000000000002px;width:10.60px;height:8.76px;background:#c6a0dc;border-radius:0.5px;"></div>
<div style="position:absolute;left:479.5px;top:234.48000000000002px;width:27.30px;height:11.56px;background:#e9f7ee;"></div>
<div style="position:absolute;left:583.8px;top:234.48000000000002px;width:46.50px;height:11.56px;background:#e9f7ee;"></div>
<div style="position:absolute;left:630.3px;top:234.48000000000002px;width:22.70px;height:11.56px;background:#e9f7ee;"></div>
<div style="position:absolute;left:244.2px;top:238.34000000000003px;font-size:4.7px;line-height:5.64px;color:#1a1a1a;font-weight:normal;white-space:nowrap;-webkit-text-stroke:0.2px #1a1a1a;letter-spacing:0.1px;">325</div>
<svg style="position:absolute;left:271.8px;top:238.78000000000003px" width="3" height="3" viewBox="0 0 3 3"><path d="M0.6 0.3 L2.2 1.5 L0.6 2.7" stroke="#444" stroke-width="0.5" fill="none"/></svg>
<div style="position:absolute;left:276px;top:238.34000000000003px;width:62px;overflow:hidden;text-overflow:ellipsis;font-size:4.7px;line-height:5.64px;color:#222;font-weight:normal;white-space:nowrap;letter-spacing:0.06px;-webkit-text-stroke:0.2px #222;"><i>Abdichtungen und Bekleidungen</i></div>
<div style="position:absolute;right:329.70px;top:238.34000000000003px;font-size:4.7px;line-height:5.64px;color:#2a2c2e;font-weight:normal;white-space:nowrap;text-align:right;-webkit-text-stroke:0.12px #2a2c2e;letter-spacing:0.08px;">10.094,41 €</div>
<div style="position:absolute;right:304.00px;top:238.34000000000003px;font-size:4.7px;line-height:5.64px;color:#2a2c2e;font-weight:normal;white-space:nowrap;text-align:right;-webkit-text-stroke:0.12px #2a2c2e;letter-spacing:0.08px;">100,00%</div>
<div style="position:absolute;right:259.70px;top:238.34000000000003px;font-size:4.7px;line-height:5.64px;color:#2a2c2e;font-weight:normal;white-space:nowrap;text-align:right;-webkit-text-stroke:0.12px #2a2c2e;letter-spacing:0.08px;">25.655,15 €</div>
<div style="position:absolute;right:232.40px;top:238.34000000000003px;font-size:4.7px;line-height:5.64px;color:#3aa864;font-weight:normal;white-space:nowrap;text-align:right;-webkit-text-stroke:0.12px #3aa864;letter-spacing:0.08px;">96,64%</div>
<div style="position:absolute;right:178.50px;top:238.34000000000003px;font-size:4.7px;line-height:5.64px;color:#2a2c2e;font-weight:normal;white-space:nowrap;text-align:right;-webkit-text-stroke:0.12px #2a2c2e;letter-spacing:0.08px;">0,00 €</div>
<div style="position:absolute;right:155.40px;top:238.34000000000003px;font-size:4.7px;line-height:5.64px;color:#2a2c2e;font-weight:normal;white-space:nowrap;text-align:right;-webkit-text-stroke:0.12px #2a2c2e;letter-spacing:0.08px;">0,00%</div>
<div style="position:absolute;right:108.90px;top:238.34000000000003px;font-size:4.7px;line-height:5.64px;color:#3aa864;font-weight:normal;white-space:nowrap;text-align:right;-webkit-text-stroke:0.12px #3aa864;letter-spacing:0.08px;">17.438,20 €</div>
<div style="position:absolute;right:86.20px;top:238.34000000000003px;font-size:4.7px;line-height:5.64px;color:#3aa864;font-weight:normal;white-space:nowrap;text-align:right;-webkit-text-stroke:0.12px #3aa864;letter-spacing:0.08px;">43,50%</div>
<div style="position:absolute;right:38.60px;top:238.34000000000003px;font-size:4.7px;line-height:5.64px;color:#2a2c2e;font-weight:normal;white-space:nowrap;text-align:right;-webkit-text-stroke:0.12px #2a2c2e;letter-spacing:0.08px;">40.064,41 €</div>
<div style="position:absolute;right:15.60px;top:238.34000000000003px;font-size:4.7px;line-height:5.64px;color:#2a2c2e;font-weight:normal;white-space:nowrap;text-align:right;-webkit-text-stroke:0.12px #2a2c2e;letter-spacing:0.08px;">100,0…</div>
<div style="position:absolute;left:244.2px;top:249.90000000000003px;font-size:4.7px;line-height:5.64px;color:#1a1a1a;font-weight:normal;white-space:nowrap;-webkit-text-stroke:0.2px #1a1a1a;letter-spacing:0.1px;">390</div>
<svg style="position:absolute;left:271.8px;top:250.34000000000003px" width="3" height="3" viewBox="0 0 3 3"><path d="M0.6 0.3 L2.2 1.5 L0.6 2.7" stroke="#444" stroke-width="0.5" fill="none"/></svg>
<div style="position:absolute;left:276px;top:249.90000000000003px;width:62px;overflow:hidden;text-overflow:ellipsis;font-size:4.7px;line-height:5.64px;color:#222;font-weight:normal;white-space:nowrap;letter-spacing:0.06px;-webkit-text-stroke:0.2px #222;"><i>Sonstiges von KG 300</i></div>
<div style="position:absolute;right:329.70px;top:249.90000000000003px;font-size:4.7px;line-height:5.64px;color:#2a2c2e;font-weight:normal;white-space:nowrap;text-align:right;-webkit-text-stroke:0.12px #2a2c2e;letter-spacing:0.08px;">0,00 €</div>
<div style="position:absolute;right:304.00px;top:249.90000000000003px;font-size:4.7px;line-height:5.64px;color:#2a2c2e;font-weight:normal;white-space:nowrap;text-align:right;-webkit-text-stroke:0.12px #2a2c2e;letter-spacing:0.08px;">0,00%</div>
<div style="position:absolute;right:259.70px;top:249.90000000000003px;font-size:4.7px;line-height:5.64px;color:#2a2c2e;font-weight:normal;white-space:nowrap;text-align:right;-webkit-text-stroke:0.12px #2a2c2e;letter-spacing:0.08px;">0,00 €</div>
<div style="position:absolute;right:232.40px;top:249.90000000000003px;font-size:4.7px;line-height:5.64px;color:#2a2c2e;font-weight:normal;white-space:nowrap;text-align:right;-webkit-text-stroke:0.12px #2a2c2e;letter-spacing:0.08px;">0,00%</div>
<div style="position:absolute;right:178.50px;top:249.90000000000003px;font-size:4.7px;line-height:5.64px;color:#2a2c2e;font-weight:normal;white-space:nowrap;text-align:right;-webkit-text-stroke:0.12px #2a2c2e;letter-spacing:0.08px;">0,00 €</div>
<div style="position:absolute;right:155.40px;top:249.90000000000003px;font-size:4.7px;line-height:5.64px;color:#2a2c2e;font-weight:normal;white-space:nowrap;text-align:right;-webkit-text-stroke:0.12px #2a2c2e;letter-spacing:0.08px;">0,00%</div>
<div style="position:absolute;right:108.90px;top:249.90000000000003px;font-size:4.7px;line-height:5.64px;color:#2a2c2e;font-weight:normal;white-space:nowrap;text-align:right;-webkit-text-stroke:0.12px #2a2c2e;letter-spacing:0.08px;">0,00 €</div>
<div style="position:absolute;right:86.20px;top:249.90000000000003px;font-size:4.7px;line-height:5.64px;color:#2a2c2e;font-weight:normal;white-space:nowrap;text-align:right;-webkit-text-stroke:0.12px #2a2c2e;letter-spacing:0.08px;">0,00%</div>
<div style="position:absolute;right:38.60px;top:249.90000000000003px;font-size:4.7px;line-height:5.64px;color:#2a2c2e;font-weight:normal;white-space:nowrap;text-align:right;-webkit-text-stroke:0.12px #2a2c2e;letter-spacing:0.08px;">1.007,31 €</div>
<div style="position:absolute;right:15.60px;top:249.90000000000003px;font-size:4.7px;line-height:5.64px;color:#2a2c2e;font-weight:normal;white-space:nowrap;text-align:right;-webkit-text-stroke:0.12px #2a2c2e;letter-spacing:0.08px;">0,00%</div>
<div style="position:absolute;left:211.9px;top:259.0px;width:10.60px;height:8.76px;background:#f7db72;border-radius:0.5px;"></div>
<div style="position:absolute;left:479.5px;top:257.6px;width:27.30px;height:11.56px;background:#e9f7ee;"></div>
<div style="position:absolute;left:560.7px;top:257.6px;width:23.10px;height:11.56px;background:#e9f7ee;"></div>
<div style="position:absolute;left:583.8px;top:257.6px;width:46.50px;height:11.56px;background:#e9f7ee;"></div>
<div style="position:absolute;left:630.3px;top:257.6px;width:22.70px;height:11.56px;background:#e9f7ee;"></div>
<div style="position:absolute;left:700.6px;top:257.6px;width:23.00px;height:11.56px;background:#fbe9e9;"></div>
<svg style="position:absolute;left:232.2px;top:261.90000000000003px" width="3" height="3" viewBox="0 0 3 3"><path d="M0.6 0.3 L2.2 1.5 L0.6 2.7" stroke="#444" stroke-width="0.5" fill="none"/></svg>
<div style="position:absolute;left:237.2px;top:261.46px;font-size:4.7px;line-height:5.64px;color:#1a1a1a;font-weight:normal;white-space:nowrap;-webkit-text-stroke:0.2px #1a1a1a;letter-spacing:0.1px;">330</div>
<div style="position:absolute;left:276px;top:261.46px;width:62px;overflow:hidden;text-overflow:ellipsis;font-size:4.7px;line-height:5.64px;color:#222;font-weight:normal;white-space:nowrap;letter-spacing:0.06px;-webkit-text-stroke:0.2px #222;">Außenwände/Vertikale Baukonstruktionen</div>
<div style="position:absolute;right:329.70px;top:261.46px;font-size:4.7px;line-height:5.64px;color:#2a2c2e;font-weight:normal;white-space:nowrap;text-align:right;-webkit-text-stroke:0.12px #2a2c2e;letter-spacing:0.08px;">371.641,57 €</div>
<div style="position:absolute;right:304.00px;top:261.46px;font-size:4.7px;line-height:5.64px;color:#2a2c2e;font-weight:normal;white-space:nowrap;text-align:right;-webkit-text-stroke:0.12px #2a2c2e;letter-spacing:0.08px;">100,00%</div>
<div style="position:absolute;right:259.70px;top:261.46px;font-size:4.7px;line-height:5.64px;color:#2a2c2e;font-weight:normal;white-space:nowrap;text-align:right;-webkit-text-stroke:0.12px #2a2c2e;letter-spacing:0.08px;">189.756,44 €</div>
<div style="position:absolute;right:232.40px;top:261.46px;font-size:4.7px;line-height:5.64px;color:#3aa864;font-weight:normal;white-space:nowrap;text-align:right;-webkit-text-stroke:0.12px #3aa864;letter-spacing:0.08px;">51,05%</div>
<div style="position:absolute;right:178.50px;top:261.46px;font-size:4.7px;line-height:5.64px;color:#2a2c2e;font-weight:normal;white-space:nowrap;text-align:right;-webkit-text-stroke:0.12px #2a2c2e;letter-spacing:0.08px;">33.187,44 €</div>
<div style="position:absolute;right:155.40px;top:261.46px;font-size:4.7px;line-height:5.64px;color:#3aa864;font-weight:normal;white-space:nowrap;text-align:right;-webkit-text-stroke:0.12px #3aa864;letter-spacing:0.08px;">8,93%</div>
<div style="position:absolute;right:108.90px;top:261.46px;font-size:4.7px;line-height:5.64px;color:#3aa864;font-weight:normal;white-space:nowrap;text-align:right;-webkit-text-stroke:0.12px #3aa864;letter-spacing:0.08px;">155.486,12 €</div>
<div style="position:absolute;right:86.20px;top:261.46px;font-size:4.7px;line-height:5.64px;color:#3aa864;font-weight:normal;white-space:nowrap;text-align:right;-webkit-text-stroke:0.12px #3aa864;letter-spacing:0.08px;">41,84%</div>
<div style="position:absolute;right:38.60px;top:261.46px;font-size:4.7px;line-height:5.64px;color:#2a2c2e;font-weight:normal;white-space:nowrap;text-align:right;-webkit-text-stroke:0.12px #2a2c2e;letter-spacing:0.08px;">543.367,58 €</div>
<div style="position:absolute;right:15.60px;top:261.46px;font-size:4.7px;line-height:5.64px;color:#d2413c;font-weight:normal;white-space:nowrap;text-align:right;-webkit-text-stroke:0.12px #d2413c;letter-spacing:0.08px;">146,20%</div>
<div style="position:absolute;left:211.9px;top:270.56px;width:10.60px;height:8.76px;background:#f7db72;border-radius:0.5px;"></div>
<div style="position:absolute;left:479.5px;top:269.16px;width:27.30px;height:11.56px;background:#e9f7ee;"></div>
<div style="position:absolute;left:560.7px;top:269.16px;width:23.10px;height:11.56px;background:#e9f7ee;"></div>
<div style="position:absolute;left:583.8px;top:269.16px;width:46.50px;height:11.56px;background:#e9f7ee;"></div>
<div style="position:absolute;left:630.3px;top:269.16px;width:22.70px;height:11.56px;background:#e9f7ee;"></div>
<div style="position:absolute;left:700.6px;top:269.16px;width:23.00px;height:11.56px;background:#fbe9e9;"></div>
<svg style="position:absolute;left:231.7px;top:273.76000000000005px" width="3" height="3" viewBox="0 0 3 3"><path d="M0.3 0.6 L1.5 2.2 L2.7 0.6" stroke="#444" stroke-width="0.5" fill="none"/></svg>
<div style="position:absolute;left:237.2px;top:273.02px;font-size:4.7px;line-height:5.64px;color:#1a1a1a;font-weight:normal;white-space:nowrap;-webkit-text-stroke:0.2px #1a1a1a;letter-spacing:0.1px;">340</div>
<div style="position:absolute;left:276px;top:273.02px;width:62px;overflow:hidden;text-overflow:ellipsis;font-size:4.7px;line-height:5.64px;color:#222;font-weight:normal;white-space:nowrap;letter-spacing:0.06px;-webkit-text-stroke:0.2px #222;">Innenwände/Vertikale Baukonstr.</div>
<div style="position:absolute;right:329.70px;top:273.02px;font-size:4.7px;line-height:5.64px;color:#2a2c2e;font-weight:normal;white-space:nowrap;text-align:right;-webkit-text-stroke:0.12px #2a2c2e;letter-spacing:0.08px;">68.396,61 €</div>
<div style="position:absolute;right:304.00px;top:273.02px;font-size:4.7px;line-height:5.64px;color:#2a2c2e;font-weight:normal;white-space:nowrap;text-align:right;-webkit-text-stroke:0.12px #2a2c2e;letter-spacing:0.08px;">100,00%</div>
<div style="position:absolute;right:259.70px;top:273.02px;font-size:4.7px;line-height:5.64px;color:#2a2c2e;font-weight:normal;white-space:nowrap;text-align:right;-webkit-text-stroke:0.12px #2a2c2e;letter-spacing:0.08px;">48.931,06 €</div>
<div style="position:absolute;right:232.40px;top:273.02px;font-size:4.7px;line-height:5.64px;color:#3aa864;font-weight:normal;white-space:nowrap;text-align:right;-webkit-text-stroke:0.12px #3aa864;letter-spacing:0.08px;">66,53%</div>
<div style="position:absolute;right:178.50px;top:273.02px;font-size:4.7px;line-height:5.64px;color:#2a2c2e;font-weight:normal;white-space:nowrap;text-align:right;-webkit-text-stroke:0.12px #2a2c2e;letter-spacing:0.08px;">36.280,56 €</div>
<div style="position:absolute;right:155.40px;top:273.02px;font-size:4.7px;line-height:5.64px;color:#3aa864;font-weight:normal;white-space:nowrap;text-align:right;-webkit-text-stroke:0.12px #3aa864;letter-spacing:0.08px;">42,10%</div>
<div style="position:absolute;right:108.90px;top:273.02px;font-size:4.7px;line-height:5.64px;color:#3aa864;font-weight:normal;white-space:nowrap;text-align:right;-webkit-text-stroke:0.12px #3aa864;letter-spacing:0.08px;">37.917,82 €</div>
<div style="position:absolute;right:86.20px;top:273.02px;font-size:4.7px;line-height:5.64px;color:#3aa864;font-weight:normal;white-space:nowrap;text-align:right;-webkit-text-stroke:0.12px #3aa864;letter-spacing:0.08px;">45,65%</div>
<div style="position:absolute;right:38.60px;top:273.02px;font-size:4.7px;line-height:5.64px;color:#2a2c2e;font-weight:normal;white-space:nowrap;text-align:right;-webkit-text-stroke:0.12px #2a2c2e;letter-spacing:0.08px;">105.604,24 €</div>
<div style="position:absolute;right:15.60px;top:273.02px;font-size:4.7px;line-height:5.64px;color:#d2413c;font-weight:normal;white-space:nowrap;text-align:right;-webkit-text-stroke:0.12px #d2413c;letter-spacing:0.08px;">125,11%</div>
<div style="position:absolute;left:479.5px;top:280.72px;width:27.30px;height:11.56px;background:#fbe9e9;"></div>
<div style="position:absolute;left:560.7px;top:280.72px;width:23.10px;height:11.56px;background:#e9f7ee;"></div>
<div style="position:absolute;left:583.8px;top:280.72px;width:46.50px;height:11.56px;background:#fbe9e9;"></div>
<div style="position:absolute;left:630.3px;top:280.72px;width:22.70px;height:11.56px;background:#fbe9e9;"></div>
<div style="position:absolute;left:700.6px;top:280.72px;width:23.00px;height:11.56px;background:#fbe9e9;"></div>
<div style="position:absolute;left:244.2px;top:284.58px;font-size:4.7px;line-height:5.64px;color:#1a1a1a;font-weight:normal;white-space:nowrap;-webkit-text-stroke:0.2px #1a1a1a;letter-spacing:0.1px;">341</div>
<svg style="position:absolute;left:271.8px;top:285.02000000000004px" width="3" height="3" viewBox="0 0 3 3"><path d="M0.6 0.3 L2.2 1.5 L0.6 2.7" stroke="#444" stroke-width="0.5" fill="none"/></svg>
<div style="position:absolute;left:276px;top:284.58px;width:62px;overflow:hidden;text-overflow:ellipsis;font-size:4.7px;line-height:5.64px;color:#222;font-weight:normal;white-space:nowrap;letter-spacing:0.06px;-webkit-text-stroke:0.2px #222;">Tragende Innenwände</div>
<div style="position:absolute;right:329.70px;top:284.58px;font-size:4.7px;line-height:5.64px;color:#2a2c2e;font-weight:normal;white-space:nowrap;text-align:right;-webkit-text-stroke:0.12px #2a2c2e;letter-spacing:0.08px;">4.531,71 €</div>
<div style="position:absolute;right:304.00px;top:284.58px;font-size:4.7px;line-height:5.64px;color:#2a2c2e;font-weight:normal;white-space:nowrap;text-align:right;-webkit-text-stroke:0.12px #2a2c2e;letter-spacing:0.08px;">100,00%</div>
<div style="position:absolute;right:259.70px;top:284.58px;font-size:4.7px;line-height:5.64px;color:#2a2c2e;font-weight:normal;white-space:nowrap;text-align:right;-webkit-text-stroke:0.12px #2a2c2e;letter-spacing:0.08px;">5.358,56 €</div>
<div style="position:absolute;right:232.40px;top:284.58px;font-size:4.7px;line-height:5.64px;color:#d2413c;font-weight:normal;white-space:nowrap;text-align:right;-webkit-text-stroke:0.12px #d2413c;letter-spacing:0.08px;">118,24%</div>
<div style="position:absolute;right:178.50px;top:284.58px;font-size:4.7px;line-height:5.64px;color:#2a2c2e;font-weight:normal;white-space:nowrap;text-align:right;-webkit-text-stroke:0.12px #2a2c2e;letter-spacing:0.08px;">5.358,56 €</div>
<div style="position:absolute;right:155.40px;top:284.58px;font-size:4.7px;line-height:5.64px;color:#3aa864;font-weight:normal;white-space:nowrap;text-align:right;-webkit-text-stroke:0.12px #3aa864;letter-spacing:0.08px;">77,07%</div>
<div style="position:absolute;right:108.90px;top:284.58px;font-size:4.7px;line-height:5.64px;color:#d2413c;font-weight:normal;white-space:nowrap;text-align:right;-webkit-text-stroke:0.12px #d2413c;letter-spacing:0.08px;">-8.828,45 €</div>
<div style="position:absolute;right:86.20px;top:284.58px;font-size:4.7px;line-height:5.64px;color:#d2413c;font-weight:normal;white-space:nowrap;text-align:right;-webkit-text-stroke:0.12px #d2413c;letter-spacing:0.08px;">-48,92%</div>
<div style="position:absolute;right:38.60px;top:284.58px;font-size:4.7px;line-height:5.64px;color:#2a2c2e;font-weight:normal;white-space:nowrap;text-align:right;-webkit-text-stroke:0.12px #2a2c2e;letter-spacing:0.08px;">8.050,50 €</div>
<div style="position:absolute;right:15.60px;top:284.58px;font-size:4.7px;line-height:5.64px;color:#d2413c;font-weight:normal;white-space:nowrap;text-align:right;-webkit-text-stroke:0.12px #d2413c;letter-spacing:0.08px;">141,00%</div>
<div style="position:absolute;left:583.8px;top:292.28000000000003px;width:46.50px;height:11.56px;background:#e9f7ee;"></div>
<div style="position:absolute;left:630.3px;top:292.28000000000003px;width:22.70px;height:11.56px;background:#e9f7ee;"></div>
<div style="position:absolute;left:244.2px;top:296.14px;font-size:4.7px;line-height:5.64px;color:#1a1a1a;font-weight:normal;white-space:nowrap;-webkit-text-stroke:0.2px #1a1a1a;letter-spacing:0.1px;">342</div>
<div style="position:absolute;left:276px;top:296.14px;width:62px;overflow:hidden;text-overflow:ellipsis;font-size:4.7px;line-height:5.64px;color:#222;font-weight:normal;white-space:nowrap;letter-spacing:0.06px;">Nichttragende Innenwände</div>
<div style="position:absolute;right:329.70px;top:296.14px;font-size:4.7px;line-height:5.64px;color:#444;font-weight:normal;white-space:nowrap;text-align:right;letter-spacing:0.08px;">55.235,57 €</div>
<div style="position:absolute;right:304.00px;top:296.14px;font-size:4.7px;line-height:5.64px;color:#444;font-weight:normal;white-space:nowrap;text-align:right;letter-spacing:0.08px;">100,00%</div>
<div style="position:absolute;right:259.70px;top:296.14px;font-size:4.7px;line-height:5.64px;color:#444;font-weight:normal;white-space:nowrap;text-align:right;letter-spacing:0.08px;">0,00 €</div>
<div style="position:absolute;right:232.40px;top:296.14px;font-size:4.7px;line-height:5.64px;color:#444;font-weight:normal;white-space:nowrap;text-align:right;letter-spacing:0.08px;">0,00%</div>
<div style="position:absolute;right:178.50px;top:296.14px;font-size:4.7px;line-height:5.64px;color:#444;font-weight:normal;white-space:nowrap;text-align:right;letter-spacing:0.08px;">0,00 €</div>
<div style="position:absolute;right:155.40px;top:296.14px;font-size:4.7px;line-height:5.64px;color:#444;font-weight:normal;white-space:nowrap;text-align:right;letter-spacing:0.08px;">0,00%</div>
<div style="position:absolute;right:108.90px;top:296.14px;font-size:4.7px;line-height:5.64px;color:#3aa864;font-weight:normal;white-space:nowrap;text-align:right;letter-spacing:0.08px;">55.235,57 €</div>
<div style="position:absolute;right:86.20px;top:296.14px;font-size:4.7px;line-height:5.64px;color:#3aa864;font-weight:normal;white-space:nowrap;text-align:right;letter-spacing:0.08px;">100,00%</div>
<div style="position:absolute;right:38.60px;top:296.14px;font-size:4.7px;line-height:5.64px;color:#444;font-weight:normal;white-space:nowrap;text-align:right;letter-spacing:0.08px;">55.235,57 €</div>
<div style="position:absolute;right:15.60px;top:296.14px;font-size:4.7px;line-height:5.64px;color:#444;font-weight:normal;white-space:nowrap;text-align:right;letter-spacing:0.08px;">100,00%</div>
<div style="position:absolute;left:479.5px;top:303.84000000000003px;width:27.30px;height:11.56px;background:#fbe9e9;"></div>
<div style="position:absolute;left:560.7px;top:303.84000000000003px;width:23.10px;height:11.56px;background:#fbe9e9;"></div>
<div style="position:absolute;left:583.8px;top:303.84000000000003px;width:46.50px;height:11.56px;background:#fbe9e9;"></div>
<div style="position:absolute;left:630.3px;top:303.84000000000003px;width:22.70px;height:11.56px;background:#fbe9e9;"></div>
<div style="position:absolute;left:700.6px;top:303.84000000000003px;width:23.00px;height:11.56px;background:#fbe9e9;"></div>
<div style="position:absolute;left:244.2px;top:307.7px;font-size:4.7px;line-height:5.64px;color:#1a1a1a;font-weight:normal;white-space:nowrap;-webkit-text-stroke:0.2px #1a1a1a;letter-spacing:0.1px;">344</div>
<svg style="position:absolute;left:271.8px;top:308.14000000000004px" width="3" height="3" viewBox="0 0 3 3"><path d="M0.6 0.3 L2.2 1.5 L0.6 2.7" stroke="#444" stroke-width="0.5" fill="none"/></svg>
<div style="position:absolute;left:276px;top:307.7px;width:62px;overflow:hidden;text-overflow:ellipsis;font-size:4.7px;line-height:5.64px;color:#222;font-weight:normal;white-space:nowrap;letter-spacing:0.06px;-webkit-text-stroke:0.2px #222;">Innenwandöffnungen</div>
<div style="position:absolute;right:329.70px;top:307.7px;font-size:4.7px;line-height:5.64px;color:#2a2c2e;font-weight:normal;white-space:nowrap;text-align:right;-webkit-text-stroke:0.12px #2a2c2e;letter-spacing:0.08px;">4.701,23 €</div>
<div style="position:absolute;right:304.00px;top:307.7px;font-size:4.7px;line-height:5.64px;color:#2a2c2e;font-weight:normal;white-space:nowrap;text-align:right;-webkit-text-stroke:0.12px #2a2c2e;letter-spacing:0.08px;">100,00%</div>
<div style="position:absolute;right:259.70px;top:307.7px;font-size:4.7px;line-height:5.64px;color:#2a2c2e;font-weight:normal;white-space:nowrap;text-align:right;-webkit-text-stroke:0.12px #2a2c2e;letter-spacing:0.08px;">25.000,00 €</div>
<div style="position:absolute;right:232.40px;top:307.7px;font-size:4.7px;line-height:5.64px;color:#d2413c;font-weight:normal;white-space:nowrap;text-align:right;-webkit-text-stroke:0.12px #d2413c;letter-spacing:0.08px;">100,00%</div>
<div style="position:absolute;right:178.50px;top:307.7px;font-size:4.7px;line-height:5.64px;color:#2a2c2e;font-weight:normal;white-space:nowrap;text-align:right;-webkit-text-stroke:0.12px #2a2c2e;letter-spacing:0.08px;">25.000,00 €</div>
<div style="position:absolute;right:155.40px;top:307.7px;font-size:4.7px;line-height:5.64px;color:#d2413c;font-weight:normal;white-space:nowrap;text-align:right;-webkit-text-stroke:0.12px #d2413c;letter-spacing:0.08px;">118,02%</div>
<div style="position:absolute;right:108.90px;top:307.7px;font-size:4.7px;line-height:5.64px;color:#d2413c;font-weight:normal;white-space:nowrap;text-align:right;-webkit-text-stroke:0.12px #d2413c;letter-spacing:0.08px;">-154.000,00 €</div>
<div style="position:absolute;right:86.20px;top:307.7px;font-size:4.7px;line-height:5.64px;color:#d2413c;font-weight:normal;white-space:nowrap;text-align:right;-webkit-text-stroke:0.12px #d2413c;letter-spacing:0.08px;">-49,03%</div>
<div style="position:absolute;right:38.60px;top:307.7px;font-size:4.7px;line-height:5.64px;color:#2a2c2e;font-weight:normal;white-space:nowrap;text-align:right;-webkit-text-stroke:0.12px #2a2c2e;letter-spacing:0.08px;">450.000,00 €</div>
<div style="position:absolute;right:15.60px;top:307.7px;font-size:4.7px;line-height:5.64px;color:#d2413c;font-weight:normal;white-space:nowrap;text-align:right;-webkit-text-stroke:0.12px #d2413c;letter-spacing:0.08px;">118,02%</div>
<div style="position:absolute;left:479.5px;top:315.40000000000003px;width:27.30px;height:11.56px;background:#fbe9e9;"></div>
<div style="position:absolute;left:583.8px;top:315.40000000000003px;width:46.50px;height:11.56px;background:#fbe9e9;"></div>
<div style="position:absolute;left:630.3px;top:315.40000000000003px;width:22.70px;height:11.56px;background:#fbe9e9;"></div>
<div style="position:absolute;left:700.6px;top:315.40000000000003px;width:23.00px;height:11.56px;background:#fbe9e9;"></div>
<div style="position:absolute;left:244.2px;top:319.26px;font-size:4.7px;line-height:5.64px;color:#1a1a1a;font-weight:normal;white-space:nowrap;-webkit-text-stroke:0.2px #1a1a1a;letter-spacing:0.1px;">345</div>
<svg style="position:absolute;left:271.8px;top:319.70000000000005px" width="3" height="3" viewBox="0 0 3 3"><path d="M0.6 0.3 L2.2 1.5 L0.6 2.7" stroke="#444" stroke-width="0.5" fill="none"/></svg>
<div style="position:absolute;left:276px;top:319.26px;width:62px;overflow:hidden;text-overflow:ellipsis;font-size:4.7px;line-height:5.64px;color:#222;font-weight:normal;white-space:nowrap;letter-spacing:0.06px;-webkit-text-stroke:0.2px #222;">Innenwandbekleidungen</div>
<div style="position:absolute;right:329.70px;top:319.26px;font-size:4.7px;line-height:5.64px;color:#2a2c2e;font-weight:normal;white-space:nowrap;text-align:right;-webkit-text-stroke:0.12px #2a2c2e;letter-spacing:0.08px;">5.931,05 €</div>
<div style="position:absolute;right:304.00px;top:319.26px;font-size:4.7px;line-height:5.64px;color:#2a2c2e;font-weight:normal;white-space:nowrap;text-align:right;-webkit-text-stroke:0.12px #2a2c2e;letter-spacing:0.08px;">100,00%</div>
<div style="position:absolute;right:259.70px;top:319.26px;font-size:4.7px;line-height:5.64px;color:#2a2c2e;font-weight:normal;white-space:nowrap;text-align:right;-webkit-text-stroke:0.12px #2a2c2e;letter-spacing:0.08px;">10.964,92 €</div>
<div style="position:absolute;right:232.40px;top:319.26px;font-size:4.7px;line-height:5.64px;color:#d2413c;font-weight:normal;white-space:nowrap;text-align:right;-webkit-text-stroke:0.12px #d2413c;letter-spacing:0.08px;">156,61%</div>
<div style="position:absolute;right:178.50px;top:319.26px;font-size:4.7px;line-height:5.64px;color:#2a2c2e;font-weight:normal;white-space:nowrap;text-align:right;-webkit-text-stroke:0.12px #2a2c2e;letter-spacing:0.08px;">0,00 €</div>
<div style="position:absolute;right:155.40px;top:319.26px;font-size:4.7px;line-height:5.64px;color:#2a2c2e;font-weight:normal;white-space:nowrap;text-align:right;-webkit-text-stroke:0.12px #2a2c2e;letter-spacing:0.08px;">0,00%</div>
<div style="position:absolute;right:108.90px;top:319.26px;font-size:4.7px;line-height:5.64px;color:#d2413c;font-weight:normal;white-space:nowrap;text-align:right;-webkit-text-stroke:0.12px #d2413c;letter-spacing:0.08px;">-5.033,86 €</div>
<div style="position:absolute;right:86.20px;top:319.26px;font-size:4.7px;line-height:5.64px;color:#d2413c;font-weight:normal;white-space:nowrap;text-align:right;-webkit-text-stroke:0.12px #d2413c;letter-spacing:0.08px;">-55,04%</div>
<div style="position:absolute;right:38.60px;top:319.26px;font-size:4.7px;line-height:5.64px;color:#2a2c2e;font-weight:normal;white-space:nowrap;text-align:right;-webkit-text-stroke:0.12px #2a2c2e;letter-spacing:0.08px;">10.964,92 €</div>
<div style="position:absolute;right:15.60px;top:319.26px;font-size:4.7px;line-height:5.64px;color:#d2413c;font-weight:normal;white-space:nowrap;text-align:right;-webkit-text-stroke:0.12px #d2413c;letter-spacing:0.08px;">156,61%</div>
<div style="position:absolute;left:210px;top:95.41000000000001px;width:524.00px;height:0.70px;background:#e4e7ea;"></div>
<div style="position:absolute;left:210px;top:106.97000000000001px;width:524.00px;height:0.70px;background:#f0f2f4;"></div>
<div style="position:absolute;left:210px;top:118.53000000000002px;width:524.00px;height:0.70px;background:#f0f2f4;"></div>
<div style="position:absolute;left:210px;top:130.09px;width:524.00px;height:0.70px;background:#f0f2f4;"></div>
<div style="position:absolute;left:210px;top:141.65px;width:524.00px;height:0.70px;background:#f0f2f4;"></div>
<div style="position:absolute;left:210px;top:153.21px;width:524.00px;height:0.70px;background:#f0f2f4;"></div>
<div style="position:absolute;left:210px;top:164.77px;width:524.00px;height:0.70px;background:#f0f2f4;"></div>
<div style="position:absolute;left:210px;top:176.33px;width:524.00px;height:0.70px;background:#dfe3e7;"></div>
<div style="position:absolute;left:210px;top:187.89000000000001px;width:524.00px;height:0.70px;background:#f0f2f4;"></div>
<div style="position:absolute;left:210px;top:199.45000000000002px;width:524.00px;height:0.70px;background:#f0f2f4;"></div>
<div style="position:absolute;left:210px;top:211.01000000000002px;width:524.00px;height:0.70px;background:#f0f2f4;"></div>
<div style="position:absolute;left:210px;top:222.57000000000002px;width:524.00px;height:0.70px;background:#dfe3e7;"></div>
<div style="position:absolute;left:210px;top:234.13000000000002px;width:524.00px;height:0.70px;background:#f0f2f4;"></div>
<div style="position:absolute;left:210px;top:245.69000000000003px;width:524.00px;height:0.70px;background:#f0f2f4;"></div>
<div style="position:absolute;left:210px;top:257.25px;width:524.00px;height:0.70px;background:#e2e5e8;"></div>
<div style="position:absolute;left:210px;top:268.81px;width:524.00px;height:0.70px;background:#f0f2f4;"></div>
<div style="position:absolute;left:210px;top:280.37px;width:524.00px;height:0.70px;background:#e2e5e8;"></div>
<div style="position:absolute;left:210px;top:291.93px;width:524.00px;height:0.70px;background:#f0f2f4;"></div>
<div style="position:absolute;left:210px;top:303.49px;width:524.00px;height:0.70px;background:#f0f2f4;"></div>
<div style="position:absolute;left:210px;top:315.05px;width:524.00px;height:0.70px;background:#f0f2f4;"></div>
<div style="position:absolute;left:210px;top:326.61px;width:524.00px;height:0.70px;background:#e6e9ec;"></div>
<div style="position:absolute;left:223.29999999999998px;top:84.2px;width:0.65px;height:242.76px;background:#e6e9ec;"></div>
<div style="position:absolute;left:339.09999999999997px;top:84.2px;width:0.65px;height:242.76px;background:#e6e9ec;"></div>
<div style="position:absolute;left:351.2px;top:84.2px;width:0.65px;height:242.76px;background:#e6e9ec;"></div>
<div style="position:absolute;left:409.2px;top:84.2px;width:0.65px;height:242.76px;background:#e6e9ec;"></div>
<div style="position:absolute;left:434.9px;top:84.2px;width:0.65px;height:242.76px;background:#e6e9ec;"></div>
<div style="position:absolute;left:479.2px;top:84.2px;width:0.65px;height:242.76px;background:#e6e9ec;"></div>
<div style="position:absolute;left:506.5px;top:84.2px;width:0.65px;height:242.76px;background:#e6e9ec;"></div>
<div style="position:absolute;left:560.4000000000001px;top:84.2px;width:0.65px;height:242.76px;background:#e6e9ec;"></div>
<div style="position:absolute;left:583.5px;top:84.2px;width:0.65px;height:242.76px;background:#e6e9ec;"></div>
<div style="position:absolute;left:630.0px;top:84.2px;width:0.65px;height:242.76px;background:#e6e9ec;"></div>
<div style="position:absolute;left:652.7px;top:84.2px;width:0.65px;height:242.76px;background:#e6e9ec;"></div>
<div style="position:absolute;left:700.3000000000001px;top:84.2px;width:0.65px;height:242.76px;background:#e6e9ec;"></div>
<div style="position:absolute;left:723.3000000000001px;top:84.2px;width:0.65px;height:242.76px;background:#e6e9ec;"></div>
<div style="position:absolute;left:723.6px;top:84.2px;width:10.40px;height:242.76px;background:#f4f5f7;"></div>
<div style="position:absolute;left:471.5px;top:329.6px;font-size:4.5px;line-height:5.40px;color:#888;font-weight:normal;white-space:nowrap;">…</div>
<div style="position:absolute;left:210px;top:338.9px;width:524.00px;height:11.70px;background:#f1f3f5;"></div>
<div style="position:absolute;left:223.29999999999998px;top:338.9px;width:0.70px;height:11.70px;background:#e7eaed;"></div>
<div style="position:absolute;left:267.5px;top:338.9px;width:0.70px;height:11.70px;background:#e7eaed;"></div>
<div style="position:absolute;left:339.09999999999997px;top:338.9px;width:0.70px;height:11.70px;background:#e7eaed;"></div>
<div style="position:absolute;left:351.2px;top:338.9px;width:0.70px;height:11.70px;background:#e7eaed;"></div>
<div style="position:absolute;left:409.2px;top:338.9px;width:0.70px;height:11.70px;background:#e7eaed;"></div>
<div style="position:absolute;left:434.9px;top:338.9px;width:0.70px;height:11.70px;background:#e7eaed;"></div>
<div style="position:absolute;left:479.2px;top:338.9px;width:0.70px;height:11.70px;background:#e7eaed;"></div>
<div style="position:absolute;left:506.5px;top:338.9px;width:0.70px;height:11.70px;background:#e7eaed;"></div>
<div style="position:absolute;left:560.4000000000001px;top:338.9px;width:0.70px;height:11.70px;background:#e7eaed;"></div>
<div style="position:absolute;left:583.5px;top:338.9px;width:0.70px;height:11.70px;background:#e7eaed;"></div>
<div style="position:absolute;left:630.0px;top:338.9px;width:0.70px;height:11.70px;background:#e7eaed;"></div>
<div style="position:absolute;left:652.7px;top:338.9px;width:0.70px;height:11.70px;background:#e7eaed;"></div>
<div style="position:absolute;left:700.3000000000001px;top:338.9px;width:0.70px;height:11.70px;background:#e7eaed;"></div>
<div style="position:absolute;left:723.3000000000001px;top:338.9px;width:0.70px;height:11.70px;background:#e7eaed;"></div>
<div style="position:absolute;left:210px;top:350.1px;width:524.00px;height:0.80px;background:#e2e5e8;"></div>
<div style="position:absolute;left:226.0px;top:342.51px;font-size:4.2px;line-height:5.04px;color:#1e1e1e;font-weight:normal;white-space:nowrap;-webkit-text-stroke:0.3px #1e1e1e;">KGR</div>
<div style="position:absolute;left:270.4px;top:342.51px;font-size:4.4px;line-height:5.28px;color:#1e1e1e;font-weight:normal;white-space:nowrap;-webkit-text-stroke:0.3px #1e1e1e;">Bezeichnung</div>
<div style="position:absolute;right:329.10px;top:342.51px;font-size:4.4px;line-height:5.28px;color:#1e1e1e;font-weight:normal;white-space:nowrap;text-align:right;-webkit-text-stroke:0.3px #1e1e1e;">KS - DIN276</div>
<div style="position:absolute;right:259.10px;top:342.51px;font-size:4.4px;line-height:5.28px;color:#1e1e1e;font-weight:normal;white-space:nowrap;text-align:right;-webkit-text-stroke:0.3px #1e1e1e;">Vergabe-LV</div>
<div style="position:absolute;right:177.90px;top:342.51px;font-size:4.4px;line-height:5.28px;color:#1e1e1e;font-weight:normal;white-space:nowrap;text-align:right;-webkit-text-stroke:0.3px #1e1e1e;">Leistungsstand (Ist)</div>
<div style="position:absolute;right:108.30px;top:342.51px;font-size:4.4px;line-height:5.28px;color:#1e1e1e;font-weight:normal;white-space:nowrap;text-align:right;-webkit-text-stroke:0.3px #1e1e1e;"><span style="letter-spacing:0.4px">Offener Auftrag</span></div>
<div style="position:absolute;right:38.00px;top:342.51px;font-size:4.4px;line-height:5.28px;color:#1e1e1e;font-weight:normal;white-space:nowrap;text-align:right;-webkit-text-stroke:0.3px #1e1e1e;">Prognose</div>
<div style="position:absolute;left:226.2px;top:353.705px;font-size:4.7px;line-height:5.64px;color:#555;font-weight:normal;white-space:nowrap;">KKW100</div>
<div style="position:absolute;left:270.4px;top:353.705px;width:66px;overflow:hidden;text-overflow:ellipsis;font-size:4.7px;line-height:5.64px;color:#555;white-space:nowrap;">Grundstück (in €/m²)</div>
<div style="position:absolute;right:328.90px;top:353.705px;font-size:4.7px;line-height:5.64px;color:#555;font-weight:normal;white-space:nowrap;text-align:right;">101,20 €</div>
<div style="position:absolute;right:258.90px;top:353.705px;font-size:4.7px;line-height:5.64px;color:#555;font-weight:normal;white-space:nowrap;text-align:right;">-</div>
<div style="position:absolute;right:177.70px;top:353.705px;font-size:4.7px;line-height:5.64px;color:#555;font-weight:normal;white-space:nowrap;text-align:right;">-</div>
<div style="position:absolute;right:37.80px;top:353.705px;font-size:4.7px;line-height:5.64px;color:#555;font-weight:normal;white-space:nowrap;text-align:right;">107,62 €</div>
<div style="position:absolute;left:226.2px;top:365.155px;font-size:4.7px;line-height:5.64px;color:#555;font-weight:normal;white-space:nowrap;">KKW200</div>
<div style="position:absolute;left:270.4px;top:365.155px;width:66px;overflow:hidden;text-overflow:ellipsis;font-size:4.7px;line-height:5.64px;color:#555;white-space:nowrap;">Vorbereitende Maßnahmen (in €/m²)</div>
<div style="position:absolute;right:328.90px;top:365.155px;font-size:4.7px;line-height:5.64px;color:#555;font-weight:normal;white-space:nowrap;text-align:right;">8,87 €</div>
<div style="position:absolute;right:37.80px;top:365.155px;font-size:4.7px;line-height:5.64px;color:#555;font-weight:normal;white-space:nowrap;text-align:right;">8,87 €</div>
<div style="position:absolute;left:226.2px;top:376.60499999999996px;font-size:4.7px;line-height:5.64px;color:#555;font-weight:normal;white-space:nowrap;">KKW300</div>
<div style="position:absolute;left:270.4px;top:376.60499999999996px;width:66px;overflow:hidden;text-overflow:ellipsis;font-size:4.7px;line-height:5.64px;color:#555;white-space:nowrap;">Bauwerk - Baukonstruktionen (in €/m²)</div>
<div style="position:absolute;right:328.90px;top:376.60499999999996px;font-size:4.7px;line-height:5.64px;color:#555;font-weight:normal;white-space:nowrap;text-align:right;">1.114,07 €</div>
<div style="position:absolute;right:258.90px;top:376.60499999999996px;font-size:4.7px;line-height:5.64px;color:#555;font-weight:normal;white-space:nowrap;text-align:right;">1.069,33 €</div>
<div style="position:absolute;right:177.70px;top:376.60499999999996px;font-size:4.7px;line-height:5.64px;color:#555;font-weight:normal;white-space:nowrap;text-align:right;">133,51 €</div>
<div style="position:absolute;right:37.80px;top:376.60499999999996px;font-size:4.7px;line-height:5.64px;color:#555;font-weight:normal;white-space:nowrap;text-align:right;">1.215,75 €</div>
<div style="position:absolute;left:226.2px;top:388.055px;font-size:4.7px;line-height:5.64px;color:#555;font-weight:normal;white-space:nowrap;">KKW400</div>
<div style="position:absolute;left:270.4px;top:388.055px;width:66px;overflow:hidden;text-overflow:ellipsis;font-size:4.7px;line-height:5.64px;color:#555;white-space:nowrap;">Bauwerk - Technische Anlagen (in €/m²)</div>
<div style="position:absolute;right:328.90px;top:388.055px;font-size:4.7px;line-height:5.64px;color:#555;font-weight:normal;white-space:nowrap;text-align:right;">219,63 €</div>
<div style="position:absolute;right:37.80px;top:388.055px;font-size:4.7px;line-height:5.64px;color:#555;font-weight:normal;white-space:nowrap;text-align:right;">119,63 €</div>
<div style="position:absolute;left:226.2px;top:399.505px;font-size:4.7px;line-height:5.64px;color:#555;font-weight:normal;white-space:nowrap;">KKW500</div>
<div style="position:absolute;left:270.4px;top:399.505px;width:66px;overflow:hidden;text-overflow:ellipsis;font-size:4.7px;line-height:5.64px;color:#555;white-space:nowrap;">Außenanlagen und Freiflächen (in €/m²)</div>
<div style="position:absolute;right:328.90px;top:399.505px;font-size:4.7px;line-height:5.64px;color:#555;font-weight:normal;white-space:nowrap;text-align:right;">37,25 €</div>
<div style="position:absolute;right:258.90px;top:399.505px;font-size:4.7px;line-height:5.64px;color:#555;font-weight:normal;white-space:nowrap;text-align:right;">-</div>
<div style="position:absolute;right:177.70px;top:399.505px;font-size:4.7px;line-height:5.64px;color:#555;font-weight:normal;white-space:nowrap;text-align:right;">-</div>
<div style="position:absolute;right:37.80px;top:399.505px;font-size:4.7px;line-height:5.64px;color:#555;font-weight:normal;white-space:nowrap;text-align:right;">37,25 €</div>
<div style="position:absolute;left:226.2px;top:410.955px;font-size:4.7px;line-height:5.64px;color:#555;font-weight:normal;white-space:nowrap;">KKW600</div>
<div style="position:absolute;left:270.4px;top:410.955px;width:66px;overflow:hidden;text-overflow:ellipsis;font-size:4.7px;line-height:5.64px;color:#555;white-space:nowrap;">Ausstattung und Kunstwerke (in €/m²)</div>
<div style="position:absolute;left:210px;top:361.7px;width:513.60px;height:0.70px;background:#e6e9ec;"></div>
<div style="position:absolute;left:210px;top:384.6px;width:513.60px;height:0.70px;background:#e6e9ec;"></div>
<div style="position:absolute;left:210px;top:407.5px;width:513.60px;height:0.70px;background:#e6e9ec;"></div>
<div style="position:absolute;left:223.29999999999998px;top:350.6px;width:0.65px;height:61.40px;background:#e9ecef;"></div>
<div style="position:absolute;left:267.5px;top:350.6px;width:0.65px;height:61.40px;background:#e9ecef;"></div>
<div style="position:absolute;left:339.09999999999997px;top:350.6px;width:0.65px;height:61.40px;background:#e9ecef;"></div>
<div style="position:absolute;left:351.2px;top:350.6px;width:0.65px;height:61.40px;background:#e9ecef;"></div>
<div style="position:absolute;left:409.2px;top:350.6px;width:0.65px;height:61.40px;background:#e9ecef;"></div>
<div style="position:absolute;left:434.9px;top:350.6px;width:0.65px;height:61.40px;background:#e9ecef;"></div>
<div style="position:absolute;left:479.2px;top:350.6px;width:0.65px;height:61.40px;background:#e9ecef;"></div>
<div style="position:absolute;left:506.5px;top:350.6px;width:0.65px;height:61.40px;background:#e9ecef;"></div>
<div style="position:absolute;left:560.4000000000001px;top:350.6px;width:0.65px;height:61.40px;background:#e9ecef;"></div>
<div style="position:absolute;left:583.5px;top:350.6px;width:0.65px;height:61.40px;background:#e9ecef;"></div>
<div style="position:absolute;left:630.0px;top:350.6px;width:0.65px;height:61.40px;background:#e9ecef;"></div>
<div style="position:absolute;left:652.7px;top:350.6px;width:0.65px;height:61.40px;background:#e9ecef;"></div>
<div style="position:absolute;left:700.3000000000001px;top:350.6px;width:0.65px;height:61.40px;background:#e9ecef;"></div>
<div style="position:absolute;left:723.3000000000001px;top:350.6px;width:0.65px;height:61.40px;background:#e9ecef;"></div>
<div style="position:absolute;left:723.6px;top:350.6px;width:10.40px;height:61.40px;background:#f4f5f7;"></div>
</div></body></html>
